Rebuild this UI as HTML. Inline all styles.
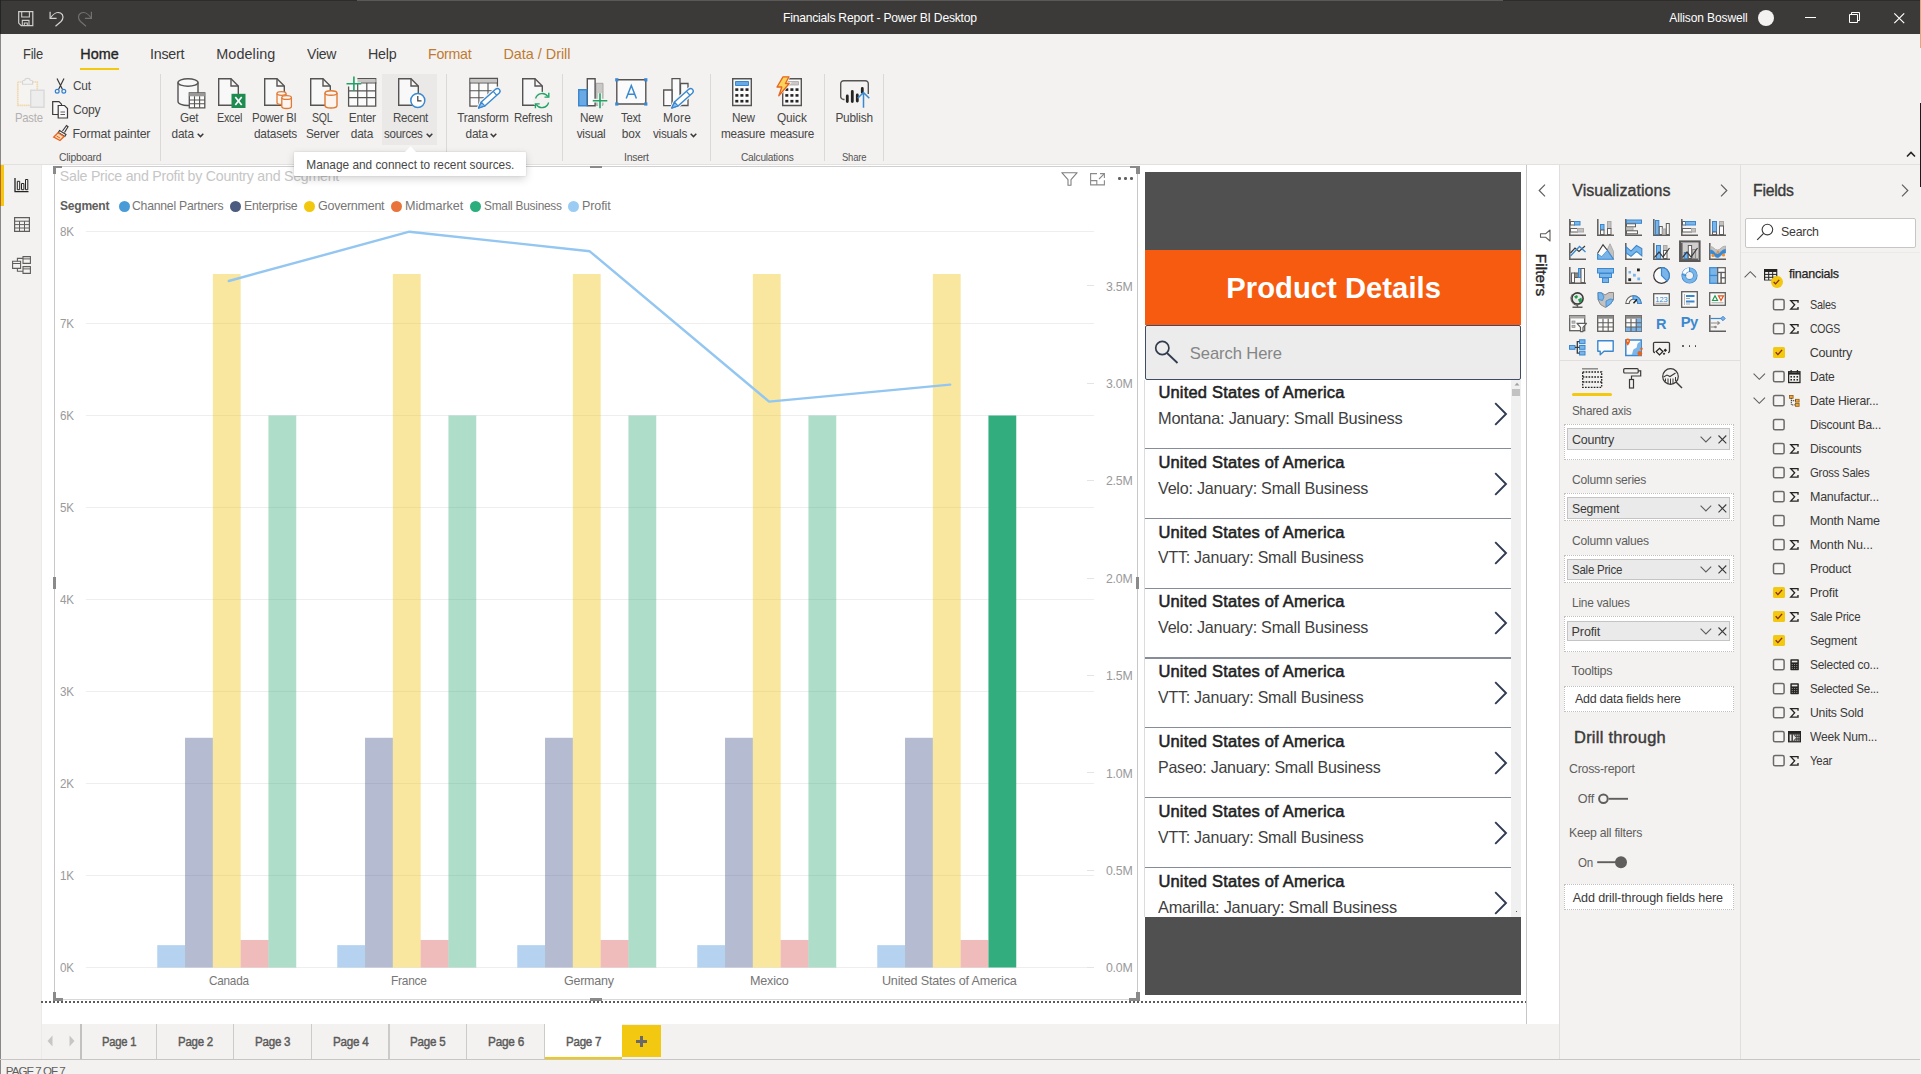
<!DOCTYPE html>
<html><head><meta charset="utf-8"><title>Financials Report - Power BI Desktop</title>
<style>
html,body{margin:0;padding:0;}
body{width:1921px;height:1074px;}
body{position:relative;background:#f3f2f1;font-family:"Liberation Sans",sans-serif;}
#app{position:absolute;left:0;top:0;width:1921px;height:1074px;overflow:hidden;background:#f3f2f1;}
.r{position:absolute;display:block;}
.t{position:absolute;white-space:nowrap;display:block;}
svg{overflow:visible;}
</style></head><body><div id="app">

<div class="r" style="left:0.00px;top:0.00px;width:1921.00px;height:34.00px;background:#3b3a39;"></div>
<div class="r" style="left:0.00px;top:0.00px;width:1921.00px;height:1.00px;background:#2d2c2b;"></div>
<div class="r" style="left:0.00px;top:0.00px;width:1.00px;height:34.00px;background:#242424;"></div>
<div class="r" style="left:357.00px;top:0.00px;width:1146.00px;height:1.00px;background:#5a5958;"></div>
<svg class="r" style="left:18.00px;top:11.00px;" width="16" height="16" viewBox="0 0 16 16" preserveAspectRatio="none"><path d="M0.700 0.700H14.800V14.600H3.200L0.700 12.100z" fill="none" stroke="#d0cfce" stroke-width="1.200"/><path d="M3.700 0.700V6H11.400V0.700M4.300 14.600V9.400H11V14.600M6.300 14.600V12H9.300V14.600" fill="none" stroke="#d0cfce" stroke-width="1.100"/></svg>
<svg class="r" style="left:48.80px;top:10.50px;" width="16" height="16" viewBox="0 0 16 16" preserveAspectRatio="none"><path d="M1.100 0.800V7.300H7.600" fill="none" stroke="#d6d5d4" stroke-width="1.200"/><path d="M1.600 6.800C4 3 8 0.500 11.500 2C15 3.800 14.500 8 12 10.500L6.500 15.200" fill="none" stroke="#d6d5d4" stroke-width="1.200"/></svg>
<svg class="r" style="left:76.70px;top:10.50px;" width="16" height="16" viewBox="0 0 16 16" preserveAspectRatio="none"><path d="M14.400 0.800V7.300H7.900" fill="none" stroke="#72716f" stroke-width="1.200"/><path d="M13.900 6.800C11.500 3 7.500 0.500 4 2C0.500 3.800 1 8 3.500 10.500L9 15.200" fill="none" stroke="#72716f" stroke-width="1.200"/></svg>
<span class="t" style="left:783.00px;top:11.90px;font-size:12.10px;line-height:13.53px;color:#ffffff;letter-spacing:-0.221px;">Financials Report - Power BI Desktop</span>
<span class="t" style="left:1669.30px;top:11.96px;font-size:12.00px;line-height:13.42px;color:#ffffff;letter-spacing:-0.110px;">Allison Boswell</span>
<div class="r" style="left:1757.80px;top:9.80px;width:16.00px;height:16.00px;background:#f3f2f1;border-radius:50%;"></div>
<div class="r" style="left:1805.30px;top:17.30px;width:10.50px;height:1.10px;background:#ffffff;"></div>
<svg class="r" style="left:1849.00px;top:12.00px;" width="11" height="11" viewBox="0 0 11 11" preserveAspectRatio="none"><path d="M0.5 2.500h8v8h-8z" fill="none" stroke="#fff" stroke-width="1"/><path d="M2.500 2.500v-2h8v8h-2" fill="none" stroke="#fff" stroke-width="1"/></svg>
<svg class="r" style="left:1893.50px;top:12.50px;" width="10.5" height="10.5" viewBox="0 0 10.5 10.5" preserveAspectRatio="none"><path d="M0.300 0.300l9.900 9.900M10.200 0.300l-9.900 9.900" fill="none" stroke="#fff" stroke-width="1.2"/></svg>
<div class="r" style="left:0.00px;top:34.00px;width:1921.00px;height:130.50px;background:#f3f2f1;"></div>
<span class="t" style="left:22.60px;top:45.51px;font-size:14.40px;line-height:16.10px;color:#3b3a39;letter-spacing:-0.250px;transform:scaleX(0.8996);transform-origin:0 50%;">File</span>
<span class="t" style="left:80.20px;top:45.51px;font-size:14.40px;line-height:16.10px;color:#252423;letter-spacing:0.063px;-webkit-text-stroke:0.35px #252423;">Home</span>
<span class="t" style="left:149.80px;top:45.51px;font-size:14.40px;line-height:16.10px;color:#3b3a39;letter-spacing:-0.250px;transform:scaleX(0.9924);transform-origin:0 50%;">Insert</span>
<span class="t" style="left:216.30px;top:45.51px;font-size:14.40px;line-height:16.10px;color:#3b3a39;letter-spacing:0.080px;">Modeling</span>
<span class="t" style="left:307.00px;top:45.51px;font-size:14.40px;line-height:16.10px;color:#3b3a39;letter-spacing:-0.250px;transform:scaleX(0.9768);transform-origin:0 50%;">View</span>
<span class="t" style="left:367.70px;top:45.51px;font-size:14.40px;line-height:16.10px;color:#3b3a39;letter-spacing:-0.250px;transform:scaleX(0.9908);transform-origin:0 50%;">Help</span>
<span class="t" style="left:427.60px;top:45.51px;font-size:14.40px;line-height:16.10px;color:#c07a30;letter-spacing:-0.250px;transform:scaleX(0.9852);transform-origin:0 50%;">Format</span>
<span class="t" style="left:503.50px;top:45.51px;font-size:14.40px;line-height:16.10px;color:#c07a30;letter-spacing:-0.019px;">Data / Drill</span>
<div class="r" style="left:80.20px;top:67.60px;width:38.80px;height:2.70px;background:#f2c811;"></div>
<svg class="r" style="left:1906.00px;top:151.00px;" width="10" height="7" viewBox="0 0 10 7" preserveAspectRatio="none"><path d="M1 5.500l4 -4 4 4" fill="none" stroke="#252423" stroke-width="1.6"/></svg>
<div class="r" style="left:0.00px;top:163.90px;width:1921.00px;height:1.40px;background:#e2e1e0;"></div>
<div class="r" style="left:42.00px;top:165.30px;width:1484.50px;height:858.70px;background:#ffffff;"></div>
<div class="r" style="left:0.00px;top:165.30px;width:41.00px;height:893.70px;background:#f3f2f1;"></div>
<div class="r" style="left:40.70px;top:165.30px;width:1.00px;height:893.70px;background:#ebeae9;"></div>
<div class="r" style="left:0.00px;top:165.40px;width:4.00px;height:40.50px;background:#f2c811;"></div>
<svg class="r" style="left:14.00px;top:178.00px;" width="15" height="15" viewBox="0 0 15 15" preserveAspectRatio="none"><path d="M1 0v13.700h13.500" fill="none" stroke="#252423" stroke-width="1.3"/><path d="M3.300 11.700V3.300h2.400v8.400zM7.500 11.700V5.500h2.400v6.200zM11.500 11.700V1.500h2.300v10.200z" fill="none" stroke="#252423" stroke-width="1"/></svg>
<svg class="r" style="left:13.50px;top:217.00px;" width="16" height="15" viewBox="0 0 16 15" preserveAspectRatio="none"><path d="M0.600 0.600h14.800v13.800H0.600z" fill="none" stroke="#605e5c" stroke-width="1.2"/><path d="M0.600 4.200h14.800M0.600 7.600h14.800M0.600 11h14.800M5.500 4.200v10.200M10.500 4.200v10.200" fill="none" stroke="#605e5c" stroke-width="1"/></svg>
<svg class="r" style="left:12.00px;top:256.00px;" width="19" height="18" viewBox="0 0 19 18" preserveAspectRatio="none"><path d="M11 0.600h7.400v6.800H11zM11 10.600h7.400v6.800H11zM0.600 5.200h8v7.200H0.600z" fill="none" stroke="#605e5c" stroke-width="1.100"/><path d="M11 2.900h7.400M11 12.900h7.400M0.600 7.500h8" fill="none" stroke="#605e5c" stroke-width="1"/><path d="M5.400 5.200V2.400H11M5.400 12.400V15.200H11" fill="none" stroke="#605e5c" stroke-width="1.100"/></svg>
<div class="r" style="left:0.00px;top:34.00px;width:1.00px;height:1040.00px;background:#8a8886;"></div>
<div class="r" style="left:0.00px;top:165.40px;width:1.00px;height:40.50px;background:#b5672a;"></div>
<div class="r" style="left:41px;top:1000.5px;width:1486px;height:0;border-top:2px dotted #5c5c5c;"></div>
<div class="r" style="left:1526.00px;top:165.30px;width:1.00px;height:858.70px;background:#c8c6c4;"></div>
<div class="r" style="left:1527.00px;top:165.30px;width:32.00px;height:858.70px;background:#ffffff;"></div>
<div class="r" style="left:1559.00px;top:165.30px;width:1.00px;height:893.70px;background:#e1dfdd;"></div>
<svg class="r" style="left:1538.00px;top:183.50px;" width="8" height="13" viewBox="0 0 8 13" preserveAspectRatio="none"><path d="M7 0.700L1.200 6.500 7 12.300" fill="none" stroke="#605e5c" stroke-width="1.2"/></svg>
<svg class="r" style="left:1538.50px;top:228.50px;" width="12" height="13" viewBox="0 0 12 13" preserveAspectRatio="none"><path d="M11 1v11l-4.500 -3.800H1.500v-3.400H6.500z" fill="none" stroke="#605e5c" stroke-width="1.1" stroke-linejoin="round"/></svg>
<span class="t" style="left:1518.0px;top:267.3px;width:46px;text-align:center;font-size:15.4px;line-height:16px;color:#252423;transform:rotate(90deg);transform-origin:50% 50%;-webkit-text-stroke:0.4px #252423;letter-spacing:0.1px;">Filters</span>
<div class="r" style="left:42.00px;top:1024.00px;width:1517.00px;height:35.00px;background:#f3f2f1;"></div>
<svg class="r" style="left:47.00px;top:1035.00px;" width="6" height="12" viewBox="0 0 6 12" preserveAspectRatio="none"><path d="M5.500 0.500v11L0.500 6z" fill="#c8c6c4"/></svg>
<svg class="r" style="left:69.00px;top:1035.00px;" width="6" height="12" viewBox="0 0 6 12" preserveAspectRatio="none"><path d="M0.500 0.500v11L5.500 6z" fill="#c8c6c4"/></svg>
<div class="r" style="left:80.20px;top:1024.00px;width:2.00px;height:35.00px;background:#c2c1c0;"></div>
<div class="r" style="left:155.80px;top:1024.00px;width:1.20px;height:35.00px;background:#cccbca;"></div>
<div class="r" style="left:233.00px;top:1024.00px;width:1.20px;height:35.00px;background:#cccbca;"></div>
<div class="r" style="left:311.00px;top:1024.00px;width:1.20px;height:35.00px;background:#cccbca;"></div>
<div class="r" style="left:388.40px;top:1024.00px;width:1.20px;height:35.00px;background:#cccbca;"></div>
<div class="r" style="left:465.80px;top:1024.00px;width:1.20px;height:35.00px;background:#cccbca;"></div>
<div class="r" style="left:544.10px;top:1024.00px;width:1.20px;height:35.00px;background:#cccbca;"></div>
<div class="r" style="left:621.30px;top:1024.00px;width:1.20px;height:35.00px;background:#cccbca;"></div>
<div class="r" style="left:544.90px;top:1024.00px;width:76.90px;height:32.60px;background:#ffffff;"></div>
<div class="r" style="left:544.90px;top:1056.60px;width:76.90px;height:2.20px;background:#f2c811;"></div>
<span class="t" style="left:101.90px;top:1034.62px;font-size:12.60px;line-height:14.09px;color:#5b5a59;letter-spacing:-0.250px;transform:scaleX(0.8892);transform-origin:0 50%;-webkit-text-stroke:0.45px #5b5a59;">Page 1</span>
<span class="t" style="left:177.80px;top:1034.62px;font-size:12.60px;line-height:14.09px;color:#5b5a59;letter-spacing:-0.250px;transform:scaleX(0.9099);transform-origin:0 50%;-webkit-text-stroke:0.45px #5b5a59;">Page 2</span>
<span class="t" style="left:255.30px;top:1034.62px;font-size:12.60px;line-height:14.09px;color:#5b5a59;letter-spacing:-0.250px;transform:scaleX(0.9177);transform-origin:0 50%;-webkit-text-stroke:0.45px #5b5a59;">Page 3</span>
<span class="t" style="left:332.70px;top:1034.62px;font-size:12.60px;line-height:14.09px;color:#5b5a59;letter-spacing:-0.250px;transform:scaleX(0.9254);transform-origin:0 50%;-webkit-text-stroke:0.45px #5b5a59;">Page 4</span>
<span class="t" style="left:410.20px;top:1034.62px;font-size:12.60px;line-height:14.09px;color:#5b5a59;letter-spacing:-0.250px;transform:scaleX(0.9203);transform-origin:0 50%;-webkit-text-stroke:0.45px #5b5a59;">Page 5</span>
<span class="t" style="left:487.80px;top:1034.62px;font-size:12.60px;line-height:14.09px;color:#5b5a59;letter-spacing:-0.250px;transform:scaleX(0.9358);transform-origin:0 50%;-webkit-text-stroke:0.45px #5b5a59;">Page 6</span>
<span class="t" style="left:565.60px;top:1034.62px;font-size:12.60px;line-height:14.09px;color:#5b5a59;letter-spacing:-0.250px;transform:scaleX(0.9151);transform-origin:0 50%;-webkit-text-stroke:0.45px #5b5a59;">Page 7</span>
<div class="r" style="left:622.20px;top:1025.10px;width:39.10px;height:31.80px;background:#f2c811;"></div>
<div class="r" style="left:636.20px;top:1040.20px;width:11.00px;height:2.80px;background:#69696a;"></div>
<div class="r" style="left:640.30px;top:1036.10px;width:2.80px;height:11.00px;background:#69696a;"></div>
<div class="r" style="left:0.00px;top:1058.80px;width:1921.00px;height:1.00px;background:#c8c6c4;"></div>
<div class="r" style="left:0.00px;top:1059.80px;width:1921.00px;height:14.20px;background:#f3f2f1;"></div>
<div class="r" style="left:0.00px;top:1059.80px;width:1.00px;height:14.20px;background:#8a8886;"></div>
<span class="t" style="left:5.80px;top:1065.48px;font-size:11.60px;line-height:12.97px;color:#605e5c;letter-spacing:-1.005px;">PAGE 7 OF 7</span>
<div class="r" style="left:381.90px;top:73.60px;width:55.60px;height:71.30px;background:#eae9e8;"></div>
<div class="r" style="left:160.30px;top:74.00px;width:1.00px;height:87.00px;background:#dad9d8;"></div>
<div class="r" style="left:446.00px;top:74.00px;width:1.00px;height:87.00px;background:#dad9d8;"></div>
<div class="r" style="left:562.30px;top:74.00px;width:1.00px;height:87.00px;background:#dad9d8;"></div>
<div class="r" style="left:710.30px;top:74.00px;width:1.00px;height:87.00px;background:#dad9d8;"></div>
<div class="r" style="left:824.20px;top:74.00px;width:1.00px;height:87.00px;background:#dad9d8;"></div>
<div class="r" style="left:883.30px;top:74.00px;width:1.00px;height:87.00px;background:#dad9d8;"></div>
<svg class="r" style="left:16.00px;top:77.00px;" width="29" height="31" viewBox="0 0 29 31" preserveAspectRatio="none"><path d="M1.800 5h19.500v23.300H1.800z" fill="#f6f4f1" stroke="#f0d9b0" stroke-width="1.700" stroke-dasharray="1.600 0.500"/><path d="M6.500 7.300V4.600c0 -1 0.800 -1.400 2.300 -1.400 0.300 -2.500 5.200 -2.500 5.500 0 1.500 0 2.300 0.400 2.300 1.400v2.700z" fill="#f3f3f3" stroke="#d6d6d6" stroke-width="1.100"/><path d="M14.700 13.200h13.300v17H14.700z" fill="#ededed" stroke="#d9d9d9" stroke-width="1.400"/></svg>
<span class="t" style="left:14.50px;top:112.14px;font-size:11.85px;line-height:13.25px;color:#b3b1af;letter-spacing:-0.250px;transform:scaleX(0.9556);transform-origin:0 50%;">Paste</span>
<svg class="r" style="left:54.00px;top:78.00px;" width="13" height="16" viewBox="0 0 13 16" preserveAspectRatio="none"><path d="M3 0.500l5.500 11M10 0.500L4.500 11.500" fill="none" stroke="#3b3a39" stroke-width="1.2"/><circle cx="3.200" cy="13.300" r="1.900" fill="none" stroke="#2f7fd0" stroke-width="1.2"/><circle cx="9.800" cy="13.300" r="1.900" fill="none" stroke="#2f7fd0" stroke-width="1.2"/></svg>
<span class="t" style="left:72.50px;top:80.46px;font-size:12.35px;line-height:13.81px;color:#484746;letter-spacing:-0.250px;transform:scaleX(0.9616);transform-origin:0 50%;">Cut</span>
<svg class="r" style="left:52.00px;top:101.00px;" width="17" height="18" viewBox="0 0 17 18" preserveAspectRatio="none"><path d="M0.700 0.700h6.300l2.500 2.500v10.300H0.700z" fill="#f8f8f8" stroke="#3b3a39" stroke-width="1.2"/><path d="M6.200 4.500h6.300l3 3v9.500H6.200z" fill="#f8f8f8" stroke="#3b3a39" stroke-width="1.2"/><path d="M8.500 11h4.500M8.500 13.500h4.500" stroke="#605e5c" stroke-width="1"/></svg>
<span class="t" style="left:72.50px;top:104.26px;font-size:12.35px;line-height:13.81px;color:#484746;letter-spacing:-0.250px;transform:scaleX(0.9793);transform-origin:0 50%;">Copy</span>
<svg class="r" style="left:52.50px;top:125.00px;" width="16" height="16" viewBox="0 0 16 16" preserveAspectRatio="none"><path d="M9.500 6l4 -5.500 1.500 1.200 -3.500 5.800" fill="#f8f8f8" stroke="#3b3a39" stroke-width="1.2"/><path d="M6.500 5.500l6.500 4 -1.200 2 -6.500 -4z" fill="#f8f8f8" stroke="#3b3a39" stroke-width="1.100"/><path d="M5 7.800l6 3.700 -4 4 -6.300 -3.500z" fill="#fbd9b8" stroke="#e8641b" stroke-width="1.300"/><path d="M3.500 11l3.500 2" stroke="#e8641b" stroke-width="1"/></svg>
<span class="t" style="left:72.50px;top:128.46px;font-size:12.35px;line-height:13.81px;color:#484746;letter-spacing:-0.177px;">Format painter</span>
<span class="t" style="left:59.00px;top:150.72px;font-size:11.00px;line-height:12.30px;color:#565453;letter-spacing:-0.250px;transform:scaleX(0.9427);transform-origin:0 50%;">Clipboard</span>
<svg class="r" style="left:177.00px;top:77.50px;" width="29" height="31" viewBox="0 0 29 31" preserveAspectRatio="none"><path d="M1 4.500v19c0 2.300 4.500 4 10 4s10 -1.700 10 -4v-19" fill="#f8f8f8" stroke="#565453" stroke-width="1.4"/><ellipse cx="11" cy="4.500" rx="10" ry="3.800" fill="#f8f8f8" stroke="#565453" stroke-width="1.4"/><path d="M12.300 15h15.500v14.800H12.300z" fill="#fdfdfd" stroke="#565453" stroke-width="1.300"/><path d="M12.300 15h15.500v3.300H12.300z" fill="#9a9998"/><path d="M12.300 22h15.500M12.300 25.800h15.500M17.500 18.300v11.500M22.600 18.300v11.500" stroke="#565453" stroke-width="1.100"/></svg>
<span class="t" style="left:179.55px;top:112.14px;font-size:11.85px;line-height:13.25px;color:#484746;letter-spacing:-0.250px;transform:scaleX(0.9946);transform-origin:0 50%;">Get</span>
<span class="t" style="left:171.50px;top:128.24px;font-size:11.85px;line-height:13.25px;color:#484746;letter-spacing:-0.188px;">data</span>
<svg class="r" style="left:196.50px;top:133.20px;" width="7" height="5" viewBox="0 0 7 5" preserveAspectRatio="none"><path d="M0.700 0.800l2.800 2.800 2.800 -2.800" fill="none" stroke="#3b3a39" stroke-width="1.5"/></svg>
<svg class="r" style="left:217.50px;top:77.50px;" width="28" height="31" viewBox="0 0 28 31" preserveAspectRatio="none"><path d="M0.700 0.700h12.300l7.300 7.300v19.300H0.700z" fill="#f8f8f8" stroke="#565453" stroke-width="1.4"/><path d="M13 0.700v7.300h7.300" fill="none" stroke="#565453" stroke-width="1.4"/><path d="M13.500 15.800h14v14.200h-14z" fill="#1e8b4f"/><path d="M17.300 19l6.400 8M23.700 19l-6.400 8" stroke="#fff" stroke-width="1.700"/></svg>
<span class="t" style="left:216.50px;top:112.14px;font-size:11.85px;line-height:13.25px;color:#484746;letter-spacing:-0.250px;transform:scaleX(0.9079);transform-origin:0 50%;">Excel</span>
<svg class="r" style="left:264.00px;top:77.50px;" width="29" height="31" viewBox="0 0 29 31" preserveAspectRatio="none"><path d="M0.700 0.700h12.300l7.300 7.300v19.300H0.700z" fill="#f8f8f8" stroke="#565453" stroke-width="1.4"/><path d="M13 0.700v7.300h7.300" fill="none" stroke="#565453" stroke-width="1.4"/><g fill="#fdf6f0" stroke="#e07a35" stroke-width="1.300"><path d="M13 15.500v9c0 1.300 2.300 2 4.500 2s4.500 -0.700 4.500 -2v-9"/><ellipse cx="17.500" cy="15.500" rx="4.500" ry="1.800"/><path d="M17.800 19.500v9c0 1.300 2.300 2 4.800 2s4.800 -0.700 4.800 -2v-9"/><ellipse cx="22.600" cy="19.500" rx="4.800" ry="1.900"/></g></svg>
<span class="t" style="left:251.50px;top:112.14px;font-size:11.85px;line-height:13.25px;color:#484746;letter-spacing:-0.250px;transform:scaleX(0.9670);transform-origin:0 50%;">Power BI</span>
<span class="t" style="left:254.00px;top:128.24px;font-size:11.85px;line-height:13.25px;color:#484746;letter-spacing:-0.214px;">datasets</span>
<svg class="r" style="left:310.30px;top:77.50px;" width="29" height="31" viewBox="0 0 29 31" preserveAspectRatio="none"><path d="M0.700 0.700h12.300l7.300 7.300v19.300H0.700z" fill="#f8f8f8" stroke="#565453" stroke-width="1.4"/><path d="M13 0.700v7.300h7.300" fill="none" stroke="#565453" stroke-width="1.4"/><g fill="#fdf6f0" stroke="#e07a35" stroke-width="1.400"><path d="M15 15v12.500c0 1.600 2.800 2.500 6 2.500s6 -0.900 6 -2.500V15"/><ellipse cx="21" cy="15" rx="6" ry="2.300"/></g></svg>
<span class="t" style="left:311.90px;top:112.14px;font-size:11.85px;line-height:13.25px;color:#484746;letter-spacing:-0.250px;transform:scaleX(0.8875);transform-origin:0 50%;">SQL</span>
<span class="t" style="left:305.60px;top:128.24px;font-size:11.85px;line-height:13.25px;color:#484746;letter-spacing:-0.250px;transform:scaleX(0.9925);transform-origin:0 50%;">Server</span>
<svg class="r" style="left:345.50px;top:75.50px;" width="31" height="31" viewBox="0 0 31 31" preserveAspectRatio="none"><path d="M2.600 10.500V30.100H29.700V2.600H11.400" fill="#fbfbfb" stroke="#565453" stroke-width="1.300"/><path d="M11.400 3.200h18.3v3.400h-18.3z" fill="#c6c5c4"/><path d="M15 7h15.400M2.600 14.800H29.700M2.600 21.700H29.700M11.700 7V30.100M20.800 7V30.100" fill="none" stroke="#565453" stroke-width="1.200"/><path d="M7.900 0.400v14.700M0.500 7.750h14.800" stroke="#21a366" stroke-width="1.600"/></svg>
<span class="t" style="left:348.75px;top:112.14px;font-size:11.85px;line-height:13.25px;color:#484746;letter-spacing:-0.250px;">Enter</span>
<span class="t" style="left:350.75px;top:128.24px;font-size:11.85px;line-height:13.25px;color:#484746;letter-spacing:-0.188px;">data</span>
<svg class="r" style="left:398.30px;top:77.50px;" width="29" height="31" viewBox="0 0 29 31" preserveAspectRatio="none"><path d="M0.700 0.700h12.300l7.300 7.300v19.300H0.700z" fill="#f8f8f8" stroke="#565453" stroke-width="1.4"/><path d="M13 0.700v7.300h7.300" fill="none" stroke="#565453" stroke-width="1.4"/><circle cx="19.800" cy="22.500" r="7" fill="#ffffff" stroke="#3a88d0" stroke-width="1.500"/><path d="M19.800 18v4.800h3.700" fill="none" stroke="#3b3a39" stroke-width="1.200"/></svg>
<span class="t" style="left:392.50px;top:112.14px;font-size:11.85px;line-height:13.25px;color:#484746;letter-spacing:-0.250px;transform:scaleX(0.9725);transform-origin:0 50%;">Recent</span>
<span class="t" style="left:384.40px;top:128.24px;font-size:11.85px;line-height:13.25px;color:#484746;letter-spacing:-0.250px;transform:scaleX(0.9727);transform-origin:0 50%;">sources</span>
<svg class="r" style="left:425.60px;top:133.20px;" width="7" height="5" viewBox="0 0 7 5" preserveAspectRatio="none"><path d="M0.700 0.800l2.800 2.800 2.800 -2.800" fill="none" stroke="#3b3a39" stroke-width="1.5"/></svg>
<svg class="r" style="left:468.50px;top:77.50px;" width="32" height="31" viewBox="0 0 32 31" preserveAspectRatio="none"><path d="M0.900 0.500h27.500v27.600H0.900z" fill="#fbfbfb" stroke="#565453" stroke-width="1.300"/><path d="M1.500 1.100h26.300v3.300H1.500z" fill="#c6c5c4"/><path d="M0.900 5h27.500M0.900 12.800h27.500M0.900 19.700h27.500M9.900 5v23M19 5v23" fill="none" stroke="#565453" stroke-width="1.100"/><path d="M12.500 32L33 13.500V32z" fill="#f3f2f1"/><path d="M9.600 30L12.330 24.070 26.840 11.070A2.600 2.600 0 0 1 30.300 14.930L15.790 27.930z" fill="#f3f2f1" stroke="#f3f2f1" stroke-width="3.600" stroke-linejoin="round"/><path d="M9.600 30L12.330 24.070 26.840 11.070A2.600 2.600 0 0 1 30.300 14.930L15.790 27.930z" fill="#ffffff" stroke="#3a88d0" stroke-width="1.400" stroke-linejoin="round"/><path d="M9.600 30L12.330 24.070 15.790 27.930z" fill="#8fc1ee" stroke="#3a88d0" stroke-width="1.200" stroke-linejoin="round"/><path d="M24.240 13.400L27.700 17.260" stroke="#3a88d0" stroke-width="1.200"/></svg>
<span class="t" style="left:457.30px;top:112.14px;font-size:11.85px;line-height:13.25px;color:#484746;letter-spacing:-0.250px;">Transform</span>
<span class="t" style="left:465.60px;top:128.24px;font-size:11.85px;line-height:13.25px;color:#484746;letter-spacing:-0.221px;">data</span>
<svg class="r" style="left:490.40px;top:133.20px;" width="7" height="5" viewBox="0 0 7 5" preserveAspectRatio="none"><path d="M0.700 0.800l2.800 2.800 2.800 -2.800" fill="none" stroke="#3b3a39" stroke-width="1.5"/></svg>
<svg class="r" style="left:521.60px;top:77.50px;" width="29" height="31" viewBox="0 0 29 31" preserveAspectRatio="none"><path d="M0.700 0.700h12.300l7.300 7.300v19.300H0.700z" fill="#f8f8f8" stroke="#565453" stroke-width="1.4"/><path d="M13 0.700v7.300h7.300" fill="none" stroke="#565453" stroke-width="1.4"/><circle cx="20" cy="22.500" r="8.800" fill="#f3f2f1"/><path d="M13.600 20.500a6.800 6.800 0 0 1 12.300 -1.800M26.600 24.500a6.800 6.800 0 0 1 -12.400 1.800" fill="none" stroke="#21a366" stroke-width="1.300"/><path d="M26.800 14.800v4.300h-4.300M13.400 30.200v-4.300h4.300" fill="none" stroke="#21a366" stroke-width="1.400"/></svg>
<span class="t" style="left:513.80px;top:112.14px;font-size:11.85px;line-height:13.25px;color:#484746;letter-spacing:-0.250px;transform:scaleX(0.9627);transform-origin:0 50%;">Refresh</span>
<svg class="r" style="left:577.60px;top:77.50px;" width="30" height="31" viewBox="0 0 30 31" preserveAspectRatio="none"><path d="M18 5.300h7v22h-7z" fill="#c9c8c7" stroke="#a9a8a7" stroke-width="1"/><path d="M9.300 0.700h7.800v27h-7.800z" fill="#fbfbfb" stroke="#565453" stroke-width="1.400"/><path d="M0.700 11.700h8v16h-8z" fill="#6aaae4" stroke="#3a88d0" stroke-width="1.400"/><path d="M22 15v15.500M14.500 22.700h15" stroke="#f3f2f1" stroke-width="3.800"/><path d="M22 15.300v15M14.800 22.700h14.500" stroke="#21a366" stroke-width="1.600"/></svg>
<span class="t" style="left:579.80px;top:112.14px;font-size:11.85px;line-height:13.25px;color:#484746;letter-spacing:-0.250px;transform:scaleX(0.9911);transform-origin:0 50%;">New</span>
<span class="t" style="left:576.70px;top:128.24px;font-size:11.85px;line-height:13.25px;color:#484746;letter-spacing:-0.250px;">visual</span>
<svg class="r" style="left:615.00px;top:78.00px;" width="33" height="28" viewBox="0 0 33 28" preserveAspectRatio="none"><path d="M1.800 1.800h29v24.200h-29z" fill="#fbfbfb" stroke="#565453" stroke-width="1.400"/><path d="M11.200 20.500L16.300 7.500 21.400 20.500M13 16.200h6.600" fill="none" stroke="#3a88d0" stroke-width="1.500"/><g fill="#3a88d0"><rect x="0.200" y="0.200" width="3.200" height="3.200"/><rect x="29.200" y="0.200" width="3.200" height="3.200"/><rect x="0.200" y="24.400" width="3.200" height="3.200"/><rect x="29.200" y="24.400" width="3.200" height="3.200"/></g></svg>
<span class="t" style="left:621.30px;top:112.14px;font-size:11.85px;line-height:13.25px;color:#484746;letter-spacing:-0.250px;transform:scaleX(0.9532);transform-origin:0 50%;">Text</span>
<span class="t" style="left:621.80px;top:128.24px;font-size:11.85px;line-height:13.25px;color:#484746;letter-spacing:-0.053px;">box</span>
<svg class="r" style="left:662.70px;top:77.50px;" width="31" height="31" viewBox="0 0 31 31" preserveAspectRatio="none"><path d="M17.500 5.500h7.500v22h-7.500z" fill="#fbfbfb" stroke="#565453" stroke-width="1.300"/><path d="M9 0.700h8v27H9z" fill="#fbfbfb" stroke="#565453" stroke-width="1.300"/><path d="M0.700 12h8.300v15.700H0.700z" fill="#fbfbfb" stroke="#565453" stroke-width="1.300"/><g transform="translate(-0.800,0)"><path d="M9.600 30L12.330 24.070 26.840 11.070A2.600 2.600 0 0 1 30.300 14.930L15.790 27.930z" fill="#f3f2f1" stroke="#f3f2f1" stroke-width="3.600" stroke-linejoin="round"/><path d="M9.600 30L12.330 24.070 26.840 11.070A2.600 2.600 0 0 1 30.300 14.930L15.790 27.930z" fill="#ffffff" stroke="#3a88d0" stroke-width="1.400" stroke-linejoin="round"/><path d="M9.600 30L12.330 24.070 15.790 27.930z" fill="#8fc1ee" stroke="#3a88d0" stroke-width="1.200" stroke-linejoin="round"/><path d="M24.240 13.400L27.700 17.260" stroke="#3a88d0" stroke-width="1.200"/></g></svg>
<span class="t" style="left:662.50px;top:112.14px;font-size:11.85px;line-height:13.25px;color:#484746;letter-spacing:0.250px;transform:scaleX(1.0091);transform-origin:0 50%;">More</span>
<span class="t" style="left:653.00px;top:128.24px;font-size:11.85px;line-height:13.25px;color:#484746;letter-spacing:-0.250px;transform:scaleX(0.9879);transform-origin:0 50%;">visuals</span>
<svg class="r" style="left:689.50px;top:133.20px;" width="7" height="5" viewBox="0 0 7 5" preserveAspectRatio="none"><path d="M0.700 0.800l2.800 2.800 2.800 -2.800" fill="none" stroke="#3b3a39" stroke-width="1.5"/></svg>
<span class="t" style="left:623.80px;top:150.72px;font-size:11.00px;line-height:12.30px;color:#565453;letter-spacing:-0.250px;transform:scaleX(0.9520);transform-origin:0 50%;">Insert</span>
<svg class="r" style="left:732.00px;top:77.50px;" width="20" height="29" viewBox="0 0 20 29" preserveAspectRatio="none"><path d="M0.700 0.700h18.600v26.800H0.700z" fill="#fbfbfb" stroke="#565453" stroke-width="1.400"/><path d="M3.500 3.500h13v4h-13z" fill="#6aaae4" stroke="#3a88d0" stroke-width="1"/><g fill="#252423"><rect x="3.3" y="10.3" width="3" height="2.600"/><rect x="8.4" y="10.3" width="3" height="2.600"/><rect x="13.5" y="10.3" width="3" height="2.600"/><rect x="3.3" y="16.1" width="3" height="2.600"/><rect x="8.4" y="16.1" width="3" height="2.600"/><rect x="13.5" y="16.1" width="3" height="2.600"/><rect x="3.3" y="21.9" width="3" height="2.600"/><rect x="8.4" y="21.9" width="3" height="2.600"/><rect x="13.5" y="21.9" width="3" height="2.600"/></g></svg>
<span class="t" style="left:731.70px;top:112.14px;font-size:11.85px;line-height:13.25px;color:#484746;letter-spacing:-0.250px;transform:scaleX(0.9911);transform-origin:0 50%;">New</span>
<span class="t" style="left:720.60px;top:128.24px;font-size:11.85px;line-height:13.25px;color:#484746;letter-spacing:-0.250px;transform:scaleX(0.9954);transform-origin:0 50%;">measure</span>
<svg class="r" style="left:781.70px;top:77.50px;" width="20" height="29" viewBox="0 0 20 29" preserveAspectRatio="none"><path d="M0.700 0.700h18.600v26.800H0.700z" fill="#fbfbfb" stroke="#565453" stroke-width="1.400"/><path d="M5 3.500h11.500v3.500H5z" fill="#c9c8c7" stroke="#a9a8a7" stroke-width="0.800"/><g fill="#252423"><rect x="3.3" y="10.3" width="3" height="2.600"/><rect x="8.4" y="10.3" width="3" height="2.600"/><rect x="13.5" y="10.3" width="3" height="2.600"/><rect x="3.3" y="16.1" width="3" height="2.600"/><rect x="8.4" y="16.1" width="3" height="2.600"/><rect x="13.5" y="16.1" width="3" height="2.600"/><rect x="3.3" y="21.9" width="3" height="2.600"/><rect x="8.4" y="21.9" width="3" height="2.600"/><rect x="13.5" y="21.9" width="3" height="2.600"/></g></svg>
<svg class="r" style="left:775.50px;top:75.50px;" width="14" height="21" viewBox="0 0 14 21" preserveAspectRatio="none"><path d="M7 0.800h6l-3.600 6.700h3.800L2.800 19.800l3 -8.800H1z" fill="#f3f2f1" stroke="#f3f2f1" stroke-width="2.500"/><path d="M7 0.800h6l-3.600 6.700h3.800L2.800 19.800l3 -8.800H1z" fill="#f9d35b" stroke="#e8641b" stroke-width="1.300" stroke-linejoin="round"/></svg>
<span class="t" style="left:776.90px;top:112.14px;font-size:11.85px;line-height:13.25px;color:#484746;letter-spacing:-0.073px;">Quick</span>
<span class="t" style="left:769.80px;top:128.24px;font-size:11.85px;line-height:13.25px;color:#484746;letter-spacing:-0.250px;transform:scaleX(0.9909);transform-origin:0 50%;">measure</span>
<span class="t" style="left:740.70px;top:150.72px;font-size:11.00px;line-height:12.30px;color:#565453;letter-spacing:-0.250px;transform:scaleX(0.9236);transform-origin:0 50%;">Calculations</span>
<svg class="r" style="left:839.50px;top:80.00px;" width="31" height="28" viewBox="0 0 31 28" preserveAspectRatio="none"><path d="M4.500 19.500h-0.800a3 3 0 0 1 -3 -3V3.700a3 3 0 0 1 3 -3h21.600a3 3 0 0 1 3 3V14" fill="none" stroke="#565453" stroke-width="1.400"/><g stroke="#252423" stroke-width="2.800" stroke-linecap="round"><path d="M7.300 16v5.500M12.300 11.500v10M17.300 15v6M22.300 8.500v4"/></g><path d="M23.500 13.500v14" stroke="#f3f2f1" stroke-width="4"/><path d="M23.500 12.800v15M17.700 18.300l5.800 -5.800 5.800 5.800" fill="none" stroke="#3a88d0" stroke-width="1.500"/></svg>
<span class="t" style="left:835.40px;top:112.14px;font-size:11.85px;line-height:13.25px;color:#484746;letter-spacing:-0.211px;">Publish</span>
<span class="t" style="left:841.90px;top:150.72px;font-size:11.00px;line-height:12.30px;color:#565453;letter-spacing:-0.250px;transform:scaleX(0.8606);transform-origin:0 50%;">Share</span>
<div class="r" style="left:54.00px;top:166.00px;width:1.00px;height:833.50px;background:#c8c8c8;"></div>
<div class="r" style="left:54.00px;top:165.80px;width:1084.00px;height:1.00px;background:#cfcfcf;"></div>
<div class="r" style="left:1137.30px;top:166.00px;width:1.00px;height:833.50px;background:#c8c8c8;"></div>
<div class="r" style="left:54.00px;top:998.50px;width:1084.00px;height:1.00px;background:#d8d8d8;"></div>
<span class="t" style="left:59.80px;top:168.92px;font-size:14.20px;line-height:15.88px;color:#c6c6c6;letter-spacing:-0.250px;">Sale Price and Profit by Country and Segment</span>
<svg class="r" style="left:1061.00px;top:172.00px;" width="17" height="14" viewBox="0 0 17 14" preserveAspectRatio="none"><path d="M0.800 0.700h15.400L10 7.600V13.300H7V7.600z" fill="none" stroke="#7f7f7f" stroke-width="1.1" stroke-linejoin="round"/></svg>
<svg class="r" style="left:1090.00px;top:173.20px;" width="15" height="12.5" viewBox="0 0 15 12.5" preserveAspectRatio="none"><path d="M7 0.600H0.600v11.300h13.800V7.200" fill="none" stroke="#8a8a8a" stroke-width="1.1"/><path d="M0.600 7.600h6.200v4.300" fill="none" stroke="#8a8a8a" stroke-width="1.1"/><path d="M9 6l5.200 -5.200M10 0.600h4.400v4.400" fill="none" stroke="#8a8a8a" stroke-width="1.1"/></svg>
<div class="r" style="left:1118.15px;top:177.15px;width:2.50px;height:2.50px;background:#606060;border-radius:50%;"></div>
<div class="r" style="left:1124.25px;top:177.15px;width:2.50px;height:2.50px;background:#606060;border-radius:50%;"></div>
<div class="r" style="left:1130.25px;top:177.15px;width:2.50px;height:2.50px;background:#606060;border-radius:50%;"></div>
<span class="t" style="left:59.80px;top:199.12px;font-size:12.60px;line-height:14.09px;color:#605e5c;font-weight:bold;letter-spacing:-0.250px;transform:scaleX(0.9572);transform-origin:0 50%;">Segment</span>
<div class="r" style="left:118.80px;top:200.60px;width:11.20px;height:11.20px;background:#499bd8;border-radius:50%;"></div>
<span class="t" style="left:132.40px;top:199.12px;font-size:12.60px;line-height:14.09px;color:#777676;letter-spacing:-0.250px;transform:scaleX(0.9713);transform-origin:0 50%;">Channel Partners</span>
<div class="r" style="left:230.10px;top:200.60px;width:11.20px;height:11.20px;background:#4b5c80;border-radius:50%;"></div>
<span class="t" style="left:244.00px;top:199.12px;font-size:12.60px;line-height:14.09px;color:#777676;letter-spacing:-0.250px;transform:scaleX(0.9732);transform-origin:0 50%;">Enterprise</span>
<div class="r" style="left:304.10px;top:200.60px;width:11.20px;height:11.20px;background:#f2c80f;border-radius:50%;"></div>
<span class="t" style="left:317.70px;top:199.12px;font-size:12.60px;line-height:14.09px;color:#777676;letter-spacing:-0.250px;transform:scaleX(0.9928);transform-origin:0 50%;">Government</span>
<div class="r" style="left:391.10px;top:200.60px;width:11.20px;height:11.20px;background:#e8743b;border-radius:50%;"></div>
<span class="t" style="left:405.00px;top:199.12px;font-size:12.60px;line-height:14.09px;color:#777676;letter-spacing:-0.064px;">Midmarket</span>
<div class="r" style="left:470.10px;top:200.60px;width:11.20px;height:11.20px;background:#2bae7d;border-radius:50%;"></div>
<span class="t" style="left:483.70px;top:199.12px;font-size:12.60px;line-height:14.09px;color:#777676;letter-spacing:-0.250px;transform:scaleX(0.9411);transform-origin:0 50%;">Small Business</span>
<div class="r" style="left:568.10px;top:200.60px;width:11.20px;height:11.20px;background:#9bccf3;border-radius:50%;"></div>
<span class="t" style="left:582.00px;top:199.12px;font-size:12.60px;line-height:14.09px;color:#777676;letter-spacing:-0.142px;">Profit</span>
<div class="r" style="left:85.60px;top:966.90px;width:1008.40px;height:1.20px;background:#eeeeee;"></div>
<span class="t" style="left:59.80px;top:960.62px;font-size:12.60px;line-height:14.09px;color:#9a9a9a;letter-spacing:-0.250px;transform:scaleX(0.9234);transform-origin:0 50%;">0K</span>
<div class="r" style="left:85.60px;top:874.90px;width:1008.40px;height:1.20px;background:#eeeeee;"></div>
<span class="t" style="left:59.80px;top:868.62px;font-size:12.60px;line-height:14.09px;color:#9a9a9a;letter-spacing:-0.250px;transform:scaleX(0.9234);transform-origin:0 50%;">1K</span>
<div class="r" style="left:85.60px;top:782.90px;width:1008.40px;height:1.20px;background:#eeeeee;"></div>
<span class="t" style="left:59.80px;top:776.62px;font-size:12.60px;line-height:14.09px;color:#9a9a9a;letter-spacing:-0.250px;transform:scaleX(0.9234);transform-origin:0 50%;">2K</span>
<div class="r" style="left:85.60px;top:690.90px;width:1008.40px;height:1.20px;background:#eeeeee;"></div>
<span class="t" style="left:59.80px;top:684.62px;font-size:12.60px;line-height:14.09px;color:#9a9a9a;letter-spacing:-0.250px;transform:scaleX(0.9234);transform-origin:0 50%;">3K</span>
<div class="r" style="left:85.60px;top:598.90px;width:1008.40px;height:1.20px;background:#eeeeee;"></div>
<span class="t" style="left:59.80px;top:592.62px;font-size:12.60px;line-height:14.09px;color:#9a9a9a;letter-spacing:-0.250px;transform:scaleX(0.9234);transform-origin:0 50%;">4K</span>
<div class="r" style="left:85.60px;top:506.90px;width:1008.40px;height:1.20px;background:#eeeeee;"></div>
<span class="t" style="left:59.80px;top:500.62px;font-size:12.60px;line-height:14.09px;color:#9a9a9a;letter-spacing:-0.250px;transform:scaleX(0.9234);transform-origin:0 50%;">5K</span>
<div class="r" style="left:85.60px;top:414.90px;width:1008.40px;height:1.20px;background:#eeeeee;"></div>
<span class="t" style="left:59.80px;top:408.62px;font-size:12.60px;line-height:14.09px;color:#9a9a9a;letter-spacing:-0.250px;transform:scaleX(0.9234);transform-origin:0 50%;">6K</span>
<div class="r" style="left:85.60px;top:322.90px;width:1008.40px;height:1.20px;background:#eeeeee;"></div>
<span class="t" style="left:59.80px;top:316.62px;font-size:12.60px;line-height:14.09px;color:#9a9a9a;letter-spacing:-0.250px;transform:scaleX(0.9234);transform-origin:0 50%;">7K</span>
<div class="r" style="left:85.60px;top:230.90px;width:1008.40px;height:1.20px;background:#eeeeee;"></div>
<span class="t" style="left:59.80px;top:224.62px;font-size:12.60px;line-height:14.09px;color:#9a9a9a;letter-spacing:-0.250px;transform:scaleX(0.9234);transform-origin:0 50%;">8K</span>
<div class="r" style="left:1087.00px;top:967.00px;width:7.00px;height:1.00px;background:#e4e4e4;"></div>
<span class="t" style="left:1105.60px;top:961.22px;font-size:12.60px;line-height:14.09px;color:#9a9a9a;letter-spacing:-0.250px;transform:scaleX(0.9794);transform-origin:0 50%;">0.0M</span>
<div class="r" style="left:1087.00px;top:869.64px;width:7.00px;height:1.00px;background:#e4e4e4;"></div>
<span class="t" style="left:1105.60px;top:863.86px;font-size:12.60px;line-height:14.09px;color:#9a9a9a;letter-spacing:-0.250px;transform:scaleX(0.9794);transform-origin:0 50%;">0.5M</span>
<div class="r" style="left:1087.00px;top:772.28px;width:7.00px;height:1.00px;background:#e4e4e4;"></div>
<span class="t" style="left:1105.60px;top:766.50px;font-size:12.60px;line-height:14.09px;color:#9a9a9a;letter-spacing:-0.250px;transform:scaleX(0.9794);transform-origin:0 50%;">1.0M</span>
<div class="r" style="left:1087.00px;top:674.92px;width:7.00px;height:1.00px;background:#e4e4e4;"></div>
<span class="t" style="left:1105.60px;top:669.14px;font-size:12.60px;line-height:14.09px;color:#9a9a9a;letter-spacing:-0.250px;transform:scaleX(0.9794);transform-origin:0 50%;">1.5M</span>
<div class="r" style="left:1087.00px;top:577.56px;width:7.00px;height:1.00px;background:#e4e4e4;"></div>
<span class="t" style="left:1105.60px;top:571.78px;font-size:12.60px;line-height:14.09px;color:#9a9a9a;letter-spacing:-0.250px;transform:scaleX(0.9794);transform-origin:0 50%;">2.0M</span>
<div class="r" style="left:1087.00px;top:480.20px;width:7.00px;height:1.00px;background:#e4e4e4;"></div>
<span class="t" style="left:1105.60px;top:474.42px;font-size:12.60px;line-height:14.09px;color:#9a9a9a;letter-spacing:-0.250px;transform:scaleX(0.9794);transform-origin:0 50%;">2.5M</span>
<div class="r" style="left:1087.00px;top:382.84px;width:7.00px;height:1.00px;background:#e4e4e4;"></div>
<span class="t" style="left:1105.60px;top:377.06px;font-size:12.60px;line-height:14.09px;color:#9a9a9a;letter-spacing:-0.250px;transform:scaleX(0.9794);transform-origin:0 50%;">3.0M</span>
<div class="r" style="left:1087.00px;top:285.48px;width:7.00px;height:1.00px;background:#e4e4e4;"></div>
<span class="t" style="left:1105.60px;top:279.70px;font-size:12.60px;line-height:14.09px;color:#9a9a9a;letter-spacing:-0.250px;transform:scaleX(0.9794);transform-origin:0 50%;">3.5M</span>
<svg class="r" style="left:0.00px;top:0.00px;pointer-events:none;" width="1921" height="1074" viewBox="0 0 1921 1074" preserveAspectRatio="none"><rect x="157.25" y="945.14" width="27.80" height="22.36" fill="rgba(70,145,218,0.4)"/><rect x="185.05" y="737.78" width="27.80" height="229.72" fill="rgba(70,85,138,0.4)"/><rect x="212.85" y="274.00" width="27.80" height="693.50" fill="rgba(240,195,15,0.4)"/><rect x="240.65" y="939.99" width="27.80" height="27.51" fill="rgba(218,88,85,0.4)"/><rect x="268.45" y="415.50" width="27.80" height="552.00" fill="rgba(53,170,123,0.4)"/><rect x="337.25" y="945.14" width="27.80" height="22.36" fill="rgba(70,145,218,0.4)"/><rect x="365.05" y="737.78" width="27.80" height="229.72" fill="rgba(70,85,138,0.4)"/><rect x="392.85" y="274.00" width="27.80" height="693.50" fill="rgba(240,195,15,0.4)"/><rect x="420.65" y="939.99" width="27.80" height="27.51" fill="rgba(218,88,85,0.4)"/><rect x="448.45" y="415.50" width="27.80" height="552.00" fill="rgba(53,170,123,0.4)"/><rect x="517.25" y="945.14" width="27.80" height="22.36" fill="rgba(70,145,218,0.4)"/><rect x="545.05" y="737.78" width="27.80" height="229.72" fill="rgba(70,85,138,0.4)"/><rect x="572.85" y="274.00" width="27.80" height="693.50" fill="rgba(240,195,15,0.4)"/><rect x="600.65" y="939.99" width="27.80" height="27.51" fill="rgba(218,88,85,0.4)"/><rect x="628.45" y="415.50" width="27.80" height="552.00" fill="rgba(53,170,123,0.4)"/><rect x="697.25" y="945.14" width="27.80" height="22.36" fill="rgba(70,145,218,0.4)"/><rect x="725.05" y="737.78" width="27.80" height="229.72" fill="rgba(70,85,138,0.4)"/><rect x="752.85" y="274.00" width="27.80" height="693.50" fill="rgba(240,195,15,0.4)"/><rect x="780.65" y="939.99" width="27.80" height="27.51" fill="rgba(218,88,85,0.4)"/><rect x="808.45" y="415.50" width="27.80" height="552.00" fill="rgba(53,170,123,0.4)"/><rect x="877.25" y="945.14" width="27.80" height="22.36" fill="rgba(70,145,218,0.4)"/><rect x="905.05" y="737.78" width="27.80" height="229.72" fill="rgba(70,85,138,0.4)"/><rect x="932.85" y="274.00" width="27.80" height="693.50" fill="rgba(240,195,15,0.4)"/><rect x="960.65" y="939.99" width="27.80" height="27.51" fill="rgba(218,88,85,0.4)"/><rect x="988.45" y="415.50" width="27.80" height="552.00" fill="#31ad7e"/></svg>
<svg class="r" style="left:0.00px;top:0.00px;pointer-events:none;" width="1921" height="1074" viewBox="0 0 1921 1074" preserveAspectRatio="none"><path d="M228.75 281.00 L409.40 231.70 L589.75 251.30 L769.10 401.60 L950.20 384.60" fill="none" stroke="#93c6f1" stroke-width="2.4" stroke-linejoin="round" stroke-linecap="round"/></svg>
<span class="t" style="left:209.40px;top:973.52px;font-size:12.60px;line-height:14.09px;color:#777676;letter-spacing:-0.250px;transform:scaleX(0.9327);transform-origin:0 50%;">Canada</span>
<span class="t" style="left:391.40px;top:973.52px;font-size:12.60px;line-height:14.09px;color:#777676;letter-spacing:-0.250px;transform:scaleX(0.9482);transform-origin:0 50%;">France</span>
<span class="t" style="left:564.40px;top:973.52px;font-size:12.60px;line-height:14.09px;color:#777676;letter-spacing:-0.250px;transform:scaleX(0.9937);transform-origin:0 50%;">Germany</span>
<span class="t" style="left:749.90px;top:973.52px;font-size:12.60px;line-height:14.09px;color:#777676;letter-spacing:-0.182px;">Mexico</span>
<span class="t" style="left:881.90px;top:973.52px;font-size:12.60px;line-height:14.09px;color:#777676;letter-spacing:-0.159px;">United States of America</span>
<div class="r" style="left:52.70px;top:165.90px;width:9.40px;height:1.80px;background:#8a8a8a;"></div>
<div class="r" style="left:52.70px;top:165.90px;width:3.30px;height:8.30px;background:#8a8a8a;"></div>
<div class="r" style="left:1130.00px;top:165.90px;width:9.70px;height:1.80px;background:#8a8a8a;"></div>
<div class="r" style="left:1136.20px;top:165.90px;width:3.50px;height:8.10px;background:#8a8a8a;"></div>
<div class="r" style="left:52.50px;top:998.30px;width:10.00px;height:2.60px;background:#8a8a8a;"></div>
<div class="r" style="left:52.50px;top:991.80px;width:3.20px;height:9.00px;background:#8a8a8a;"></div>
<div class="r" style="left:1129.00px;top:998.30px;width:11.00px;height:2.60px;background:#8a8a8a;"></div>
<div class="r" style="left:1136.30px;top:991.80px;width:3.50px;height:9.00px;background:#8a8a8a;"></div>
<div class="r" style="left:590.00px;top:165.90px;width:12.00px;height:2.00px;background:#8a8a8a;"></div>
<div class="r" style="left:590.00px;top:998.00px;width:12.00px;height:2.60px;background:#8a8a8a;"></div>
<div class="r" style="left:52.50px;top:577.00px;width:3.00px;height:12.00px;background:#8a8a8a;"></div>
<div class="r" style="left:1136.30px;top:577.00px;width:3.00px;height:12.00px;background:#8a8a8a;"></div>
<div class="r" style="left:1145.00px;top:171.80px;width:376.00px;height:78.40px;background:#505050;"></div>
<div class="r" style="left:1145.00px;top:250.00px;width:376.00px;height:75.40px;background:#f75b10;"></div>
<span class="t" style="left:1226.30px;top:272.39px;font-size:29.20px;line-height:32.65px;color:#ffffff;font-weight:bold;letter-spacing:0.037px;">Product Details</span>
<div class="r" style="left:1145.00px;top:379.50px;width:366.00px;height:537.80px;background:#ffffff;"></div>
<div class="r" style="left:1144.20px;top:379.50px;width:1.00px;height:537.80px;background:#dcdcdc;"></div>
<div class="r" style="left:1511.00px;top:379.50px;width:10.00px;height:537.80px;background:#f0f0f0;"></div>
<div class="r" style="left:1511.60px;top:388.60px;width:8.90px;height:7.20px;background:#c2c2c2;"></div>
<svg class="r" style="left:1513.50px;top:381.50px;" width="6" height="4" viewBox="0 0 6 4" preserveAspectRatio="none"><path d="M0.500 3.500L3 0.800 5.500 3.500z" fill="#a0a0a0"/></svg>
<div class="r" style="left:1515.50px;top:910.50px;width:1.60px;height:1.60px;background:#555;"></div>
<div class="r" style="left:1145.00px;top:325.2px;width:376.00px;height:54.5px;background:#ececec;border:1.3px solid #3f4c63;box-sizing:border-box;border-radius:2px;"></div>
<svg class="r" style="left:1154.00px;top:339.00px;" width="26" height="26" viewBox="0 0 26 26" preserveAspectRatio="none"><circle cx="8.300" cy="9" r="6.600" fill="none" stroke="#323c4e" stroke-width="1.7"/><path d="M13 14l10.500 10" fill="none" stroke="#323c4e" stroke-width="1.8"/></svg>
<span class="t" style="left:1189.80px;top:344.87px;font-size:16.60px;line-height:18.56px;color:#858585;letter-spacing:-0.099px;">Search Here</span>
<span class="t" style="left:1158.40px;top:382.90px;font-size:16.50px;line-height:18.45px;color:#1f1f1f;letter-spacing:0.192px;-webkit-text-stroke:0.55px #1f1f1f;">United States of America</span>
<span class="t" style="left:1158.40px;top:408.80px;font-size:16.50px;line-height:18.45px;color:#3f3f3f;letter-spacing:-0.250px;transform:scaleX(0.9935);transform-origin:0 50%;">Montana: January: Small Business</span>
<svg class="r" style="left:1494.00px;top:401.77px;" width="14" height="24" viewBox="0 0 14 24" preserveAspectRatio="none"><path d="M1.200 1.200L12.000 12 1.200 22.800" fill="none" stroke="#2f3b52" stroke-width="1.900"/></svg>
<div class="r" style="left:1145.00px;top:447.95px;width:366.00px;height:1.10px;background:#868c98;"></div>
<span class="t" style="left:1158.40px;top:452.73px;font-size:16.50px;line-height:18.45px;color:#1f1f1f;letter-spacing:0.192px;-webkit-text-stroke:0.55px #1f1f1f;">United States of America</span>
<span class="t" style="left:1158.40px;top:478.63px;font-size:16.50px;line-height:18.45px;color:#3f3f3f;letter-spacing:-0.250px;transform:scaleX(0.9784);transform-origin:0 50%;">Velo: January: Small Business</span>
<svg class="r" style="left:1494.00px;top:471.60px;" width="14" height="24" viewBox="0 0 14 24" preserveAspectRatio="none"><path d="M1.200 1.200L12.000 12 1.200 22.800" fill="none" stroke="#2f3b52" stroke-width="1.900"/></svg>
<div class="r" style="left:1145.00px;top:517.78px;width:366.00px;height:1.10px;background:#868c98;"></div>
<span class="t" style="left:1158.40px;top:522.56px;font-size:16.50px;line-height:18.45px;color:#1f1f1f;letter-spacing:0.192px;-webkit-text-stroke:0.55px #1f1f1f;">United States of America</span>
<span class="t" style="left:1158.40px;top:548.46px;font-size:16.50px;line-height:18.45px;color:#3f3f3f;letter-spacing:-0.250px;transform:scaleX(0.9689);transform-origin:0 50%;">VTT: January: Small Business</span>
<svg class="r" style="left:1494.00px;top:541.43px;" width="14" height="24" viewBox="0 0 14 24" preserveAspectRatio="none"><path d="M1.200 1.200L12.000 12 1.200 22.800" fill="none" stroke="#2f3b52" stroke-width="1.900"/></svg>
<div class="r" style="left:1145.00px;top:587.61px;width:366.00px;height:1.10px;background:#868c98;"></div>
<span class="t" style="left:1158.40px;top:592.39px;font-size:16.50px;line-height:18.45px;color:#1f1f1f;letter-spacing:0.192px;-webkit-text-stroke:0.55px #1f1f1f;">United States of America</span>
<span class="t" style="left:1158.40px;top:618.29px;font-size:16.50px;line-height:18.45px;color:#3f3f3f;letter-spacing:-0.250px;transform:scaleX(0.9784);transform-origin:0 50%;">Velo: January: Small Business</span>
<svg class="r" style="left:1494.00px;top:611.26px;" width="14" height="24" viewBox="0 0 14 24" preserveAspectRatio="none"><path d="M1.200 1.200L12.000 12 1.200 22.800" fill="none" stroke="#2f3b52" stroke-width="1.900"/></svg>
<div class="r" style="left:1145.00px;top:657.44px;width:366.00px;height:1.10px;background:#868c98;"></div>
<span class="t" style="left:1158.40px;top:662.22px;font-size:16.50px;line-height:18.45px;color:#1f1f1f;letter-spacing:0.192px;-webkit-text-stroke:0.55px #1f1f1f;">United States of America</span>
<span class="t" style="left:1158.40px;top:688.12px;font-size:16.50px;line-height:18.45px;color:#3f3f3f;letter-spacing:-0.250px;transform:scaleX(0.9689);transform-origin:0 50%;">VTT: January: Small Business</span>
<svg class="r" style="left:1494.00px;top:681.09px;" width="14" height="24" viewBox="0 0 14 24" preserveAspectRatio="none"><path d="M1.200 1.200L12.000 12 1.200 22.800" fill="none" stroke="#2f3b52" stroke-width="1.900"/></svg>
<div class="r" style="left:1145.00px;top:727.27px;width:366.00px;height:1.10px;background:#868c98;"></div>
<span class="t" style="left:1158.40px;top:732.05px;font-size:16.50px;line-height:18.45px;color:#1f1f1f;letter-spacing:0.192px;-webkit-text-stroke:0.55px #1f1f1f;">United States of America</span>
<span class="t" style="left:1158.40px;top:757.95px;font-size:16.50px;line-height:18.45px;color:#3f3f3f;letter-spacing:-0.250px;transform:scaleX(0.9714);transform-origin:0 50%;">Paseo: January: Small Business</span>
<svg class="r" style="left:1494.00px;top:750.92px;" width="14" height="24" viewBox="0 0 14 24" preserveAspectRatio="none"><path d="M1.200 1.200L12.000 12 1.200 22.800" fill="none" stroke="#2f3b52" stroke-width="1.900"/></svg>
<div class="r" style="left:1145.00px;top:797.10px;width:366.00px;height:1.10px;background:#868c98;"></div>
<span class="t" style="left:1158.40px;top:801.88px;font-size:16.50px;line-height:18.45px;color:#1f1f1f;letter-spacing:0.192px;-webkit-text-stroke:0.55px #1f1f1f;">United States of America</span>
<span class="t" style="left:1158.40px;top:827.78px;font-size:16.50px;line-height:18.45px;color:#3f3f3f;letter-spacing:-0.250px;transform:scaleX(0.9689);transform-origin:0 50%;">VTT: January: Small Business</span>
<svg class="r" style="left:1494.00px;top:820.75px;" width="14" height="24" viewBox="0 0 14 24" preserveAspectRatio="none"><path d="M1.200 1.200L12.000 12 1.200 22.800" fill="none" stroke="#2f3b52" stroke-width="1.900"/></svg>
<div class="r" style="left:1145.00px;top:866.93px;width:366.00px;height:1.10px;background:#868c98;"></div>
<span class="t" style="left:1158.40px;top:871.71px;font-size:16.50px;line-height:18.45px;color:#1f1f1f;letter-spacing:0.192px;-webkit-text-stroke:0.55px #1f1f1f;">United States of America</span>
<span class="t" style="left:1158.40px;top:897.61px;font-size:16.50px;line-height:18.45px;color:#3f3f3f;letter-spacing:-0.250px;transform:scaleX(0.9904);transform-origin:0 50%;">Amarilla: January: Small Business</span>
<svg class="r" style="left:1494.00px;top:890.58px;" width="14" height="24" viewBox="0 0 14 24" preserveAspectRatio="none"><path d="M1.200 1.200L12.000 12 1.200 22.800" fill="none" stroke="#2f3b52" stroke-width="1.900"/></svg>
<div class="r" style="left:1145.00px;top:917.30px;width:376.00px;height:77.50px;background:#505050;"></div>
<div class="r" style="left:1560.00px;top:165.30px;width:180.00px;height:893.70px;background:#f3f2f1;"></div>
<span class="t" style="left:1572.20px;top:182.01px;font-size:16.00px;line-height:17.89px;color:#3b3a39;letter-spacing:0.058px;-webkit-text-stroke:0.35px #3b3a39;">Visualizations</span>
<svg class="r" style="left:1720.00px;top:184.00px;" width="8" height="13" viewBox="0 0 8 13" preserveAspectRatio="none"><path d="M1 0.700l5.800 5.800L1 12.300" fill="none" stroke="#605e5c" stroke-width="1.200"/></svg>
<svg class="r" style="left:1569.00px;top:219.00px;" width="17" height="17" viewBox="0 0 17 17" preserveAspectRatio="none"><path d="M0.800 0v16.200H17" fill="none" stroke="#605e5c" stroke-width="1.500"/><rect x="1.500" y="2.500" width="4" height="3.500" fill="#fbfbfb" stroke="#605e5c"/><rect x="5.500" y="2.500" width="5.500" height="3.500" fill="#7ab5ea" stroke="#3a88d0"/><rect x="1.500" y="9.500" width="7" height="3.500" fill="#fbfbfb" stroke="#605e5c"/><rect x="8.500" y="9.500" width="6" height="3.500" fill="#c3c2c1" stroke="#a9a8a7"/></svg>
<svg class="r" style="left:1597.00px;top:219.00px;" width="17" height="17" viewBox="0 0 17 17" preserveAspectRatio="none"><path d="M0.800 0v16.200H17" fill="none" stroke="#605e5c" stroke-width="1.500"/><rect x="3.500" y="5.500" width="3.500" height="5.500" fill="#7ab5ea" stroke="#3a88d0"/><rect x="3.500" y="11" width="3.500" height="4.500" fill="#fbfbfb" stroke="#605e5c"/><rect x="10.500" y="2.500" width="3.500" height="7" fill="#c3c2c1" stroke="#a9a8a7"/><rect x="10.500" y="9.500" width="3.500" height="6" fill="#fbfbfb" stroke="#605e5c"/></svg>
<svg class="r" style="left:1625.00px;top:219.00px;" width="17" height="17" viewBox="0 0 17 17" preserveAspectRatio="none"><path d="M0.800 0v16.200H17" fill="none" stroke="#605e5c" stroke-width="1.500"/><rect x="1.500" y="1" width="15" height="3.300" fill="#7ab5ea" stroke="#3a88d0"/><rect x="1.500" y="4.800" width="9" height="3" fill="#fbfbfb" stroke="#605e5c"/><rect x="1.500" y="8.300" width="6.500" height="3" fill="#c3c2c1" stroke="#a9a8a7"/><rect x="1.500" y="11.800" width="11" height="3" fill="#fbfbfb" stroke="#605e5c"/></svg>
<svg class="r" style="left:1653.00px;top:219.00px;" width="17" height="17" viewBox="0 0 17 17" preserveAspectRatio="none"><path d="M0.800 0v16.200H17" fill="none" stroke="#605e5c" stroke-width="1.500"/><rect x="2.500" y="1.500" width="3.300" height="14" fill="#7ab5ea" stroke="#3a88d0"/><rect x="6.300" y="7.500" width="3" height="8" fill="#fbfbfb" stroke="#605e5c"/><rect x="9.800" y="10" width="3" height="5.500" fill="#c3c2c1" stroke="#a9a8a7"/><rect x="13.300" y="4.500" width="3" height="11" fill="#fbfbfb" stroke="#605e5c"/></svg>
<svg class="r" style="left:1681.00px;top:219.00px;" width="17" height="17" viewBox="0 0 17 17" preserveAspectRatio="none"><path d="M0.800 0v16.200H17" fill="none" stroke="#605e5c" stroke-width="1.500"/><rect x="1.500" y="2.500" width="3" height="3.500" fill="#fbfbfb" stroke="#605e5c"/><rect x="4.500" y="2.500" width="10" height="3.500" fill="#7ab5ea" stroke="#3a88d0"/><rect x="1.500" y="9.500" width="9" height="3.500" fill="#fbfbfb" stroke="#605e5c"/><rect x="10.500" y="9.500" width="4" height="3.500" fill="#c3c2c1" stroke="#a9a8a7"/></svg>
<svg class="r" style="left:1709.00px;top:219.00px;" width="17" height="17" viewBox="0 0 17 17" preserveAspectRatio="none"><path d="M0.800 0v16.200H17" fill="none" stroke="#605e5c" stroke-width="1.500"/><rect x="3.500" y="2.500" width="4" height="10.500" fill="#7ab5ea" stroke="#3a88d0"/><rect x="3.500" y="13" width="4" height="2.500" fill="#fbfbfb" stroke="#605e5c"/><rect x="10.500" y="2.500" width="4" height="4.500" fill="#c3c2c1" stroke="#a9a8a7"/><rect x="10.500" y="7" width="4" height="8.500" fill="#fbfbfb" stroke="#605e5c"/></svg>
<svg class="r" style="left:1569.00px;top:243.00px;" width="17" height="17" viewBox="0 0 17 17" preserveAspectRatio="none"><path d="M0.800 0v16.200H17" fill="none" stroke="#605e5c" stroke-width="1.500"/><path d="M1.500 10l4.500 -5 4 3.500 6 -5.500" fill="none" stroke="#3b3a39" stroke-width="1.200"/><path d="M1.500 13l9 -9.500 6 5.500" fill="none" stroke="#3a88d0" stroke-width="1.300"/></svg>
<svg class="r" style="left:1597.00px;top:243.00px;" width="17" height="17" viewBox="0 0 17 17" preserveAspectRatio="none"><path d="M10.200 7L13 0.800 16.500 8.400V16.200z" fill="#c3c2c1" stroke="#a9a8a7" stroke-width="0.900"/><path d="M0.600 10.500L4.600 13.200 10.200 7 16.500 16.200H0.600z" fill="#7ab5ea" stroke="#3a88d0" stroke-width="1.100" stroke-linejoin="round"/><path d="M0.600 10.300L6 1.800 10.200 7 4.600 13.200z" fill="#fbfbfb"/><path d="M0.600 10.300L6 1.800 10.200 7" fill="none" stroke="#3b3a39" stroke-width="1.100"/></svg>
<svg class="r" style="left:1625.00px;top:243.00px;" width="17" height="17" viewBox="0 0 17 17" preserveAspectRatio="none"><path d="M1.200 10L6 13.400 11.500 8.400 16.800 12.800V16H1.200z" fill="#fbfbfb"/><path d="M0.800 0v16.200H17" fill="none" stroke="#605e5c" stroke-width="1.500"/><path d="M1.200 3.900L6 8.100 11.500 2.500 16.800 5.600V12.800L11.500 8.400 6 13.400 1.200 10z" fill="#7ab5ea" stroke="#3a88d0" stroke-width="1.100"/></svg>
<svg class="r" style="left:1653.00px;top:243.00px;" width="17" height="17" viewBox="0 0 17 17" preserveAspectRatio="none"><path d="M0.800 0v16.200H17" fill="none" stroke="#605e5c" stroke-width="1.500"/><rect x="3.500" y="2.500" width="4" height="13" fill="#7ab5ea" stroke="#3a88d0"/><rect x="10.500" y="2.500" width="3.500" height="5" fill="#c3c2c1" stroke="#a9a8a7"/><rect x="10.500" y="7.500" width="3.500" height="8" fill="#fbfbfb" stroke="#605e5c"/><path d="M1.500 14.500l4.500 -5.500 4 5 6.500 -9" fill="none" stroke="#3b3a39" stroke-width="1.200"/></svg>
<svg class="r" style="left:1681.00px;top:243.00px;" width="17" height="17" viewBox="0 0 17 17" preserveAspectRatio="none"><rect x="-0.950" y="-1.600" width="19.550" height="19.600" fill="#d0cfce" stroke="#595857" stroke-width="2"/><path d="M0.800 0v16.200H17" fill="none" stroke="#605e5c" stroke-width="1.500"/><rect x="3.300" y="9.500" width="3.300" height="6" fill="#7ab5ea" stroke="#3a88d0"/><rect x="7.300" y="2.500" width="3.300" height="13" fill="#fbfbfb" stroke="#605e5c"/><rect x="11.300" y="6.500" width="3.300" height="9" fill="#c3c2c1" stroke="#8a8988"/><path d="M1.500 14.500l4.500 -5.500 4 5 6.500 -9" fill="none" stroke="#3b3a39" stroke-width="1.200"/></svg>
<svg class="r" style="left:1709.00px;top:243.00px;" width="17" height="17" viewBox="0 0 17 17" preserveAspectRatio="none"><path d="M0.800 0v16.200H17" fill="none" stroke="#605e5c" stroke-width="1.500"/><path d="M1.500 3.500c3 0 4 3.500 7 3.500s4 -4 8 -4v3.500c-4 0 -5 3.500 -8 3.500s-4 -3 -7 -3z" fill="#c3c2c1" stroke="#a9a8a7" stroke-width="0.800"/><path d="M1.500 7c3 0 4 4 7 4s4 -4.500 8 -4.500V10c-4 0 -5 4.500 -8 4.500s-4 -4 -7 -4z" fill="#3a88d0" stroke="#3a88d0" stroke-width="0.800"/><circle cx="4" cy="12.500" r="1.600" fill="#f28e2b"/><circle cx="9" cy="9" r="1.300" fill="#f28e2b"/><circle cx="14.500" cy="12" r="1.600" fill="#f28e2b"/></svg>
<svg class="r" style="left:1569.00px;top:267.00px;" width="17" height="17" viewBox="0 0 17 17" preserveAspectRatio="none"><path d="M0.800 0v16.200H17" fill="none" stroke="#605e5c" stroke-width="1.500"/><rect x="2.500" y="6" width="3" height="9.500" fill="#fbfbfb" stroke="#605e5c"/><rect x="5.500" y="6" width="4" height="4.500" fill="#8a8988" stroke="#605e5c"/><rect x="9.500" y="1.500" width="2.500" height="9" fill="#7ab5ea" stroke="#3a88d0"/><rect x="12" y="1.500" width="3.500" height="14" fill="#fbfbfb" stroke="#605e5c"/></svg>
<svg class="r" style="left:1597.00px;top:267.00px;" width="17" height="17" viewBox="0 0 17 17" preserveAspectRatio="none"><rect x="0.500" y="1.500" width="16" height="4.500" fill="#7ab5ea" stroke="#3a88d0"/><rect x="2.500" y="6.500" width="12" height="4" fill="#7ab5ea" stroke="#3a88d0"/><rect x="5.500" y="11" width="6" height="4.500" fill="#7ab5ea" stroke="#3a88d0"/></svg>
<svg class="r" style="left:1625.00px;top:267.00px;" width="17" height="17" viewBox="0 0 17 17" preserveAspectRatio="none"><path d="M0.800 0v16.200H17" fill="none" stroke="#605e5c" stroke-width="1.500"/><rect x="12" y="1.500" width="2.800" height="2.800" fill="#252423"/><rect x="3.300" y="11.300" width="2.800" height="2.800" fill="#252423"/><rect x="3.500" y="4" width="2.500" height="2.500" fill="#7ab5ea"/><rect x="8" y="6.800" width="2.800" height="2.800" fill="#7ab5ea"/><rect x="12.300" y="10.500" width="2.800" height="2.800" fill="#7ab5ea"/></svg>
<svg class="r" style="left:1653.00px;top:267.00px;" width="17" height="17" viewBox="0 0 17 17" preserveAspectRatio="none"><circle cx="8.500" cy="8.500" r="7.800" fill="#fbfbfb" stroke="#3b3a39" stroke-width="1.200"/><path d="M8.500 0.700a7.800 7.800 0 0 1 5.500 13.300L8.500 8.500z" fill="#7ab5ea" stroke="#3a88d0" stroke-width="1.200"/></svg>
<svg class="r" style="left:1681.00px;top:267.00px;" width="17" height="17" viewBox="0 0 17 17" preserveAspectRatio="none"><circle cx="8.500" cy="8.500" r="5.800" fill="none" stroke="#3a88d0" stroke-width="4.600"/><circle cx="8.500" cy="8.500" r="5.800" fill="none" stroke="#7ab5ea" stroke-width="3.200"/><path d="M3 6.500A5.800 5.800 0 0 1 8.500 2.700" fill="none" stroke="#fbfbfb" stroke-width="3.200"/><path d="M0.800 7.500l4.500 1M8.500 0.500v4.500" stroke="#3a88d0" stroke-width="1"/></svg>
<svg class="r" style="left:1709.00px;top:267.00px;" width="17" height="17" viewBox="0 0 17 17" preserveAspectRatio="none"><rect x="0.700" y="0.700" width="8" height="7.800" fill="#7ab5ea" stroke="#3a88d0" stroke-width="1.200"/><rect x="0.700" y="8.500" width="8" height="7.800" fill="#7ab5ea" stroke="#3a88d0" stroke-width="1.200"/><rect x="8.700" y="0.700" width="7.600" height="4.800" fill="#fbfbfb" stroke="#605e5c" stroke-width="1.200"/><rect x="8.700" y="5.500" width="3.500" height="10.800" fill="#fbfbfb" stroke="#605e5c" stroke-width="1.200"/><rect x="12.200" y="5.500" width="4.100" height="5.400" fill="#fbfbfb" stroke="#605e5c" stroke-width="1.200"/><rect x="12.200" y="10.900" width="4.100" height="5.400" fill="#fbfbfb" stroke="#605e5c" stroke-width="1.200"/></svg>
<svg class="r" style="left:1569.00px;top:291.00px;" width="17" height="17" viewBox="0 0 17 17" preserveAspectRatio="none"><circle cx="8.500" cy="7.500" r="5.600" fill="#e9e9e9" stroke="#3b3a39" stroke-width="1.600"/><path d="M5 5.500l3 -1.500 1 2 -2 2zM9 8.500l3.500 -2 0.500 3.500 -2.500 2z" fill="#1e9a4c"/><path d="M3.500 3A7 7 0 0 0 8.500 14.500" fill="none" stroke="#605e5c" stroke-width="1"/><path d="M8.500 13v3M3.500 16.300h10" stroke="#605e5c" stroke-width="1.400"/></svg>
<svg class="r" style="left:1597.00px;top:291.00px;" width="17" height="17" viewBox="0 0 17 17" preserveAspectRatio="none"><path d="M1 1.500l4 0.500 3 2 4 -2.500h4.500v7l-3 4.500 -5 3.500 -5 -3 -2.500 -5z" fill="#c3c2c1" stroke="#8a8988" stroke-width="1"/><path d="M1 1.500l4 0.500 2 4 -1.500 3.500 -4 -1z" fill="#7ab5ea" stroke="#3a88d0" stroke-width="0.800"/><path d="M9 10l4 -2 3.500 0.500 -3 4.500 -4.500 3z" fill="#7ab5ea" stroke="#3a88d0" stroke-width="0.800"/></svg>
<svg class="r" style="left:1625.00px;top:291.00px;" width="17" height="17" viewBox="0 0 17 17" preserveAspectRatio="none"><path d="M0.800 12.500A7.700 7.700 0 0 1 16.200 12.500h-3.400A4.300 4.300 0 0 0 4.200 12.500z" fill="#fbfbfb" stroke="#605e5c" stroke-width="1.100"/><path d="M8 4.800A7.700 7.700 0 0 1 16.200 12.500h-3.400A4.300 4.300 0 0 0 8 8.300z" fill="#7ab5ea" stroke="#3a88d0" stroke-width="1.100"/><path d="M8.500 12.300l3.500 -4" stroke="#252423" stroke-width="1.500"/></svg>
<svg class="r" style="left:1653.00px;top:291.00px;" width="17" height="17" viewBox="0 0 17 17" preserveAspectRatio="none"><rect x="0.700" y="2.700" width="15.600" height="11.600" fill="#fbfbfb" stroke="#605e5c" stroke-width="1.300"/><path d="M2.500 12.300h12" stroke="#a9a8a7" stroke-width="1"/><text x="8.500" y="10.600" font-family="Liberation Sans" font-size="7.500" text-anchor="middle" fill="#3a88d0">123</text></svg>
<svg class="r" style="left:1681.00px;top:291.00px;" width="17" height="17" viewBox="0 0 17 17" preserveAspectRatio="none"><rect x="0.700" y="0.700" width="15.600" height="15.600" fill="#fbfbfb" stroke="#605e5c" stroke-width="1.300"/><path d="M3.500 3v11" stroke="#a9a8a7" stroke-width="0.800"/><path d="M5 5h8.500M5 10.500h8.500" stroke="#3a88d0" stroke-width="1.800"/><path d="M5 7.500h4M5 13h4" stroke="#a9a8a7" stroke-width="1"/></svg>
<svg class="r" style="left:1709.00px;top:291.00px;" width="17" height="17" viewBox="0 0 17 17" preserveAspectRatio="none"><rect x="0.700" y="1.700" width="15.600" height="12.600" fill="#fbfbfb" stroke="#605e5c" stroke-width="1.300"/><path d="M2.500 11.800h12" stroke="#a9a8a7" stroke-width="1"/><path d="M3.500 9.500L6 4.800l2.500 4.700z" fill="none" stroke="#1e9a4c" stroke-width="1.200"/><path d="M9.500 4.800h5L12 9.500z" fill="none" stroke="#e8541b" stroke-width="1.200"/></svg>
<svg class="r" style="left:1569.00px;top:315.00px;" width="17" height="17" viewBox="0 0 17 17" preserveAspectRatio="none"><rect x="0.700" y="0.700" width="15" height="15" fill="#fbfbfb" stroke="#605e5c" stroke-width="1.300"/><path d="M0.700 0.700h15v2.800h-15z" fill="#a9a8a7"/><rect x="3" y="6" width="3" height="2.200" fill="#c3c2c1" stroke="#8a8988" stroke-width="0.700"/><rect x="3" y="10.300" width="3" height="2.200" fill="#c3c2c1" stroke="#8a8988" stroke-width="0.700"/><path d="M8 8.300h9.500l-3.500 4v4.300h-2.500v-4.300z" fill="#fbfbfb" stroke="#605e5c" stroke-width="1.200" stroke-linejoin="round"/></svg>
<svg class="r" style="left:1597.00px;top:315.00px;" width="17" height="17" viewBox="0 0 17 17" preserveAspectRatio="none"><rect x="0.700" y="0.700" width="15.600" height="15.600" fill="#fbfbfb" stroke="#605e5c" stroke-width="1.300"/><path d="M0.700 0.700h15.600v3h-15.600z" fill="#8a8988"/><path d="M0.700 7.800h15.600M0.700 12h15.600M6 3.700v12.600M11.200 3.700v12.600" stroke="#605e5c" stroke-width="1.100"/></svg>
<svg class="r" style="left:1625.00px;top:315.00px;" width="17" height="17" viewBox="0 0 17 17" preserveAspectRatio="none"><rect x="0.700" y="0.700" width="15.600" height="15.600" fill="#fbfbfb" stroke="#605e5c" stroke-width="1.300"/><path d="M0.700 0.700h15.600v3h-15.600z" fill="#8a8988"/><path d="M11.200 3.700h5.100v12.600h-5.100zM0.700 12h15.600v4.300H0.700z" fill="#7ab5ea"/><path d="M0.700 7.800h15.600M0.700 12h15.600M6 3.700v12.600M11.200 3.700v12.600" stroke="#605e5c" stroke-width="1.100"/></svg>
<svg class="r" style="left:1653.00px;top:315.00px;" width="17" height="17" viewBox="0 0 17 17" preserveAspectRatio="none"><text x="8.300" y="14.200" font-family="Liberation Sans" font-weight="bold" font-size="14.500" text-anchor="middle" fill="#3a88d0">R</text></svg>
<svg class="r" style="left:1681.00px;top:315.00px;" width="17" height="17" viewBox="0 0 17 17" preserveAspectRatio="none"><text x="8.300" y="11.800" font-family="Liberation Sans" font-weight="bold" font-size="14.800" text-anchor="middle" fill="#3a88d0" letter-spacing="-0.500">Py</text></svg>
<svg class="r" style="left:1709.00px;top:315.00px;" width="17" height="17" viewBox="0 0 17 17" preserveAspectRatio="none"><path d="M0.800 0v16.200H17" fill="none" stroke="#605e5c" stroke-width="1.500"/><path d="M1.500 3.500h11" stroke="#3a88d0" stroke-width="1.200"/><path d="M14 1.300l2.200 2.200L14 5.700l-2.200 -2.200z" fill="#7ab5ea" stroke="#3a88d0" stroke-width="1"/><path d="M1.500 8h9M8.500 6.300l2 1.700 -2 1.700" fill="none" stroke="#8a8988" stroke-width="1.100"/><path d="M1.500 12h5" stroke="#8a8988" stroke-width="1.100"/><circle cx="6.500" cy="12" r="1.300" fill="#8a8988"/></svg>
<svg class="r" style="left:1569.00px;top:339.00px;" width="17" height="17" viewBox="0 0 17 17" preserveAspectRatio="none"><rect x="0.500" y="6.500" width="5.500" height="3.800" fill="#7ab5ea" stroke="#3a88d0"/><rect x="10.500" y="0.800" width="5.500" height="3.800" fill="#7ab5ea" stroke="#3a88d0"/><rect x="10.500" y="6.500" width="5.500" height="3.800" fill="#7ab5ea" stroke="#3a88d0"/><rect x="10.500" y="12.200" width="5.500" height="3.800" fill="#7ab5ea" stroke="#3a88d0"/><path d="M6 8.400h4.500M10.500 2.700H8.300v11.400h2.200" fill="none" stroke="#3b3a39" stroke-width="1.300"/></svg>
<svg class="r" style="left:1597.00px;top:339.00px;" width="17" height="17" viewBox="0 0 17 17" preserveAspectRatio="none"><path d="M0.800 1.800h15.400v10.400H7l-3.800 3.500v-3.500H0.800z" fill="#fbfbfb" stroke="#3a88d0" stroke-width="1.400" stroke-linejoin="round"/></svg>
<svg class="r" style="left:1625.00px;top:339.00px;" width="17" height="17" viewBox="0 0 17 17" preserveAspectRatio="none"><path d="M0.800 1h15.400v15.400H0.800z" fill="#fbfbfb" stroke="#3a88d0" stroke-width="1.500"/><path d="M16 3c-3 0 -4 2 -4 4s-1.500 2 -3 3 -1 3.500 -2.500 6h9.500z" fill="#7ab5ea"/><path d="M2.800 -0.500a2.300 2.300 0 0 1 2.300 2.300c0 2 -2.300 5 -2.300 5s-2.300 -3 -2.300 -5a2.300 2.300 0 0 1 2.300 -2.300z" fill="#e8641b"/><circle cx="2.800" cy="2" r="0.800" fill="#fff"/><circle cx="14.800" cy="14.500" r="2.400" fill="#e8641b"/><circle cx="16.500" cy="9.800" r="1.200" fill="#e8641b"/></svg>
<svg class="r" style="left:1653.00px;top:339.00px;" width="17" height="17" viewBox="0 0 17 17" preserveAspectRatio="none"><path d="M2 13.500H1.500a1.200 1.200 0 0 1 -1 -1.200V4.500a1.200 1.200 0 0 1 1.200 -1.200h13.600a1.200 1.200 0 0 1 1.200 1.200v7.800a1.200 1.200 0 0 1 -1.200 1.200H15" fill="none" stroke="#3b3a39" stroke-width="1.300"/><path d="M6.500 9.300l3.300 3.300 -3.300 3.300 -3.300 -3.300z" fill="none" stroke="#252423" stroke-width="1.300"/><path d="M12.300 9.500l1.800 1.800 -1.800 1.800 -1.800 -1.800zM11 13.500l1.300 1.300 -1.300 1.300 -1.300 -1.300z" fill="#252423"/></svg>
<div class="r" style="left:1682.40px;top:345.20px;width:1.80px;height:1.80px;background:#3b3a39;border-radius:50%;"></div>
<div class="r" style="left:1688.50px;top:345.20px;width:1.80px;height:1.80px;background:#3b3a39;border-radius:50%;"></div>
<div class="r" style="left:1694.60px;top:345.20px;width:1.80px;height:1.80px;background:#3b3a39;border-radius:50%;"></div>
<div class="r" style="left:1560.00px;top:359.80px;width:180.00px;height:1.00px;background:#e1dfdd;"></div>
<svg class="r" style="left:1582.00px;top:368.00px;" width="20" height="20" viewBox="0 0 20 20" preserveAspectRatio="none"><path d="M0 0.800h16" stroke="#8a8988" stroke-width="1.500"/><path d="M0.700 4h19v15.300h-19zM0.700 9h19M0.700 14h19" fill="none" stroke="#252423" stroke-width="1.300" stroke-dasharray="1.700 1.200"/></svg>
<svg class="r" style="left:1623.00px;top:368.00px;" width="19" height="21" viewBox="0 0 19 21" preserveAspectRatio="none"><rect x="0.700" y="0.700" width="14.500" height="4.300" rx="1" fill="none" stroke="#3b3a39" stroke-width="1.200"/><path d="M15.200 2.800h2.500v5.200H8.500v3.500" fill="none" stroke="#3b3a39" stroke-width="1.200"/><rect x="6.500" y="11.500" width="4" height="8.500" fill="none" stroke="#3b3a39" stroke-width="1.200"/></svg>
<svg class="r" style="left:1662.00px;top:368.00px;" width="21" height="21" viewBox="0 0 21 21" preserveAspectRatio="none"><circle cx="8.500" cy="8.500" r="7.800" fill="none" stroke="#3b3a39" stroke-width="1.200"/><path d="M14 14l6 6" stroke="#3b3a39" stroke-width="1.400"/><path d="M1.500 9l3.500 -2 3 1.500 5.500 -3.500" fill="none" stroke="#3b3a39" stroke-width="1.100"/><path d="M3.500 10.500v3M6 10.500v5M8.500 10.500v5.500M11 10.500v5M13.500 9v4" stroke="#3b3a39" stroke-width="1"/></svg>
<div class="r" style="left:1572.00px;top:392.80px;width:40.00px;height:3.40px;background:#f2c811;border-radius:1.500px;"></div>
<span class="t" style="left:1571.60px;top:404.02px;font-size:12.60px;line-height:14.09px;color:#605e5c;letter-spacing:-0.250px;transform:scaleX(0.9323);transform-origin:0 50%;">Shared axis</span>
<div class="r" style="left:1564.4px;top:424.40px;width:169.4px;height:35.60px;background:#fff;border:1.2px dotted #c2c0be;box-sizing:border-box;"></div>
<div class="r" style="left:1567px;top:428.00px;width:163.3px;height:21.80px;background:#eaeaea;border:1px solid #c6c4c2;box-sizing:border-box;"></div>
<span class="t" style="left:1571.60px;top:432.52px;font-size:12.60px;line-height:14.09px;color:#3b3a39;letter-spacing:-0.250px;transform:scaleX(0.9902);transform-origin:0 50%;">Country</span>
<svg class="r" style="left:1700.00px;top:435.60px;" width="12" height="7" viewBox="0 0 12 7" preserveAspectRatio="none"><path d="M0.600 0.600l5.300 5.300 5.300 -5.300" fill="none" stroke="#605e5c" stroke-width="1.100"/></svg>
<svg class="r" style="left:1717.50px;top:434.80px;" width="9" height="9" viewBox="0 0 9 9" preserveAspectRatio="none"><path d="M0.500 0.500l7.800 7.800M8.300 0.500l-7.800 7.800" fill="none" stroke="#3b3a39" stroke-width="1.100"/></svg>
<span class="t" style="left:1571.60px;top:472.62px;font-size:12.60px;line-height:14.09px;color:#605e5c;letter-spacing:-0.250px;transform:scaleX(0.9596);transform-origin:0 50%;">Column series</span>
<div class="r" style="left:1564.4px;top:493.00px;width:169.4px;height:28.30px;background:#fff;border:1.2px dotted #c2c0be;box-sizing:border-box;"></div>
<div class="r" style="left:1567px;top:497.20px;width:163.3px;height:21.40px;background:#eaeaea;border:1px solid #c6c4c2;box-sizing:border-box;"></div>
<span class="t" style="left:1571.60px;top:501.52px;font-size:12.60px;line-height:14.09px;color:#3b3a39;letter-spacing:-0.250px;transform:scaleX(0.9687);transform-origin:0 50%;">Segment</span>
<svg class="r" style="left:1700.00px;top:504.60px;" width="12" height="7" viewBox="0 0 12 7" preserveAspectRatio="none"><path d="M0.600 0.600l5.300 5.300 5.300 -5.300" fill="none" stroke="#605e5c" stroke-width="1.100"/></svg>
<svg class="r" style="left:1717.50px;top:503.80px;" width="9" height="9" viewBox="0 0 9 9" preserveAspectRatio="none"><path d="M0.500 0.500l7.800 7.800M8.300 0.500l-7.800 7.800" fill="none" stroke="#3b3a39" stroke-width="1.100"/></svg>
<span class="t" style="left:1571.60px;top:533.82px;font-size:12.60px;line-height:14.09px;color:#605e5c;letter-spacing:-0.250px;transform:scaleX(0.9597);transform-origin:0 50%;">Column values</span>
<div class="r" style="left:1564.4px;top:554.70px;width:169.4px;height:28.10px;background:#fff;border:1.2px dotted #c2c0be;box-sizing:border-box;"></div>
<div class="r" style="left:1567px;top:559.00px;width:163.3px;height:20.80px;background:#eaeaea;border:1px solid #c6c4c2;box-sizing:border-box;"></div>
<span class="t" style="left:1571.60px;top:563.02px;font-size:12.60px;line-height:14.09px;color:#3b3a39;letter-spacing:-0.250px;transform:scaleX(0.9134);transform-origin:0 50%;">Sale Price</span>
<svg class="r" style="left:1700.00px;top:566.10px;" width="12" height="7" viewBox="0 0 12 7" preserveAspectRatio="none"><path d="M0.600 0.600l5.300 5.300 5.300 -5.300" fill="none" stroke="#605e5c" stroke-width="1.100"/></svg>
<svg class="r" style="left:1717.50px;top:565.30px;" width="9" height="9" viewBox="0 0 9 9" preserveAspectRatio="none"><path d="M0.500 0.500l7.800 7.800M8.300 0.500l-7.800 7.800" fill="none" stroke="#3b3a39" stroke-width="1.100"/></svg>
<span class="t" style="left:1571.60px;top:595.82px;font-size:12.60px;line-height:14.09px;color:#605e5c;letter-spacing:-0.250px;transform:scaleX(0.9454);transform-origin:0 50%;">Line values</span>
<div class="r" style="left:1564.4px;top:616.40px;width:169.4px;height:35.20px;background:#fff;border:1.2px dotted #c2c0be;box-sizing:border-box;"></div>
<div class="r" style="left:1567px;top:620.80px;width:163.3px;height:20.40px;background:#eaeaea;border:1px solid #c6c4c2;box-sizing:border-box;"></div>
<span class="t" style="left:1571.60px;top:624.62px;font-size:12.60px;line-height:14.09px;color:#3b3a39;letter-spacing:-0.142px;">Profit</span>
<svg class="r" style="left:1700.00px;top:627.70px;" width="12" height="7" viewBox="0 0 12 7" preserveAspectRatio="none"><path d="M0.600 0.600l5.300 5.300 5.300 -5.300" fill="none" stroke="#605e5c" stroke-width="1.100"/></svg>
<svg class="r" style="left:1717.50px;top:626.90px;" width="9" height="9" viewBox="0 0 9 9" preserveAspectRatio="none"><path d="M0.500 0.500l7.800 7.800M8.300 0.500l-7.800 7.800" fill="none" stroke="#3b3a39" stroke-width="1.100"/></svg>
<span class="t" style="left:1571.60px;top:664.32px;font-size:12.60px;line-height:14.09px;color:#605e5c;letter-spacing:-0.246px;">Tooltips</span>
<div class="r" style="left:1564.4px;top:685.50px;width:169.4px;height:26.30px;background:#fff;border:1.2px dotted #c2c0be;box-sizing:border-box;"></div>
<span class="t" style="left:1574.90px;top:692.27px;font-size:12.60px;line-height:14.09px;color:#3b3a39;letter-spacing:-0.250px;transform:scaleX(0.9886);transform-origin:0 50%;">Add data fields here</span>
<span class="t" style="left:1574.30px;top:728.51px;font-size:16.00px;line-height:17.89px;color:#3b3a39;letter-spacing:0.250px;transform:scaleX(1.0274);transform-origin:0 50%;-webkit-text-stroke:0.40px #3b3a39;">Drill through</span>
<span class="t" style="left:1568.90px;top:762.42px;font-size:12.60px;line-height:14.09px;color:#605e5c;letter-spacing:-0.250px;transform:scaleX(0.9797);transform-origin:0 50%;">Cross-report</span>
<span class="t" style="left:1577.80px;top:791.62px;font-size:12.60px;line-height:14.09px;color:#605e5c;letter-spacing:-0.087px;">Off</span>
<svg class="r" style="left:1596.00px;top:791.00px;" width="34" height="16" viewBox="0 0 34 16" preserveAspectRatio="none"><path d="M12.600 7.800H32" stroke="#605e5c" stroke-width="1.900"/><circle cx="7.400" cy="7.800" r="4.300" fill="#f3f2f1" stroke="#605e5c" stroke-width="2"/></svg>
<span class="t" style="left:1568.90px;top:826.42px;font-size:12.60px;line-height:14.09px;color:#605e5c;letter-spacing:-0.250px;transform:scaleX(0.9723);transform-origin:0 50%;">Keep all filters</span>
<span class="t" style="left:1577.80px;top:855.62px;font-size:12.60px;line-height:14.09px;color:#605e5c;letter-spacing:-0.250px;transform:scaleX(0.9180);transform-origin:0 50%;">On</span>
<svg class="r" style="left:1596.00px;top:854.00px;" width="34" height="16" viewBox="0 0 34 16" preserveAspectRatio="none"><path d="M1.200 8.200H22" stroke="#605e5c" stroke-width="1.900"/><circle cx="25" cy="8.200" r="6" fill="#605e5c"/></svg>
<div class="r" style="left:1564.4px;top:884.20px;width:169.4px;height:25.40px;background:#fff;border:1.2px dotted #c2c0be;box-sizing:border-box;"></div>
<span class="t" style="left:1572.80px;top:890.52px;font-size:12.60px;line-height:14.09px;color:#3b3a39;letter-spacing:-0.132px;">Add drill-through fields here</span>
<div class="r" style="left:1740.20px;top:165.30px;width:1.00px;height:893.70px;background:#e1dfdd;"></div>
<div class="r" style="left:1741.20px;top:165.30px;width:180.00px;height:893.70px;background:#f3f2f1;"></div>
<span class="t" style="left:1753.20px;top:182.11px;font-size:16.00px;line-height:17.89px;color:#3b3a39;letter-spacing:-0.250px;transform:scaleX(0.9848);transform-origin:0 50%;-webkit-text-stroke:0.35px #3b3a39;">Fields</span>
<svg class="r" style="left:1901.00px;top:183.50px;" width="8" height="13" viewBox="0 0 8 13" preserveAspectRatio="none"><path d="M1 0.700l5.800 5.800L1 12.300" fill="none" stroke="#605e5c" stroke-width="1.200"/></svg>
<div class="r" style="left:1745.2px;top:218.4px;width:170.8px;height:29.2px;background:#fff;border:1px solid #c8c6c4;box-sizing:border-box;border-radius:2px;"></div>
<svg class="r" style="left:1755.50px;top:223.00px;" width="18" height="18" viewBox="0 0 18 18" preserveAspectRatio="none"><circle cx="11.400" cy="6.600" r="5.300" fill="none" stroke="#3b3a39" stroke-width="1.100"/><path d="M7.600 10.400L1.200 16.800" stroke="#3b3a39" stroke-width="1.200"/></svg>
<span class="t" style="left:1780.70px;top:225.48px;font-size:13.20px;line-height:14.76px;color:#3b3a39;letter-spacing:-0.250px;transform:scaleX(0.9366);transform-origin:0 50%;">Search</span>
<div class="r" style="left:1741.20px;top:252.20px;width:179.00px;height:1.00px;background:#eceae8;"></div>
<svg class="r" style="left:1743.80px;top:271.30px;" width="13" height="7" viewBox="0 0 13 7" preserveAspectRatio="none"><path d="M0.600 6.300L6.300 0.700 12 6.300" fill="none" stroke="#605e5c" stroke-width="1.100"/></svg>
<svg class="r" style="left:1763.50px;top:269.00px;" width="14" height="12" viewBox="0 0 14 12" preserveAspectRatio="none"><rect x="0" y="0" width="13.300" height="11.500" fill="#252423"/><g fill="#f3f2f1"><rect x="1.200" y="3" width="3" height="1.900"/><rect x="5.200" y="3" width="3" height="1.900"/><rect x="9.200" y="3" width="3" height="1.900"/><rect x="1.200" y="5.900" width="3" height="1.900"/><rect x="5.200" y="5.900" width="3" height="1.900"/><rect x="9.200" y="5.900" width="3" height="1.900"/><rect x="1.200" y="8.800" width="3" height="1.900"/><rect x="5.200" y="8.800" width="3" height="1.900"/><rect x="9.200" y="8.800" width="3" height="1.900"/></g></svg>
<div class="r" style="left:1770.80px;top:276.00px;width:12.00px;height:12.00px;background:#f2c811;border-radius:50%;"></div>
<svg class="r" style="left:1773.30px;top:279.00px;" width="7" height="6" viewBox="0 0 7 6" preserveAspectRatio="none"><path d="M0.700 3l1.900 1.900 3.600 -4" fill="none" stroke="#8a2a12" stroke-width="1.300"/></svg>
<span class="t" style="left:1789.40px;top:267.45px;font-size:12.90px;line-height:14.42px;color:#252423;letter-spacing:-0.250px;transform:scaleX(0.9703);transform-origin:0 50%;-webkit-text-stroke:0.25px #252423;">financials</span>
<svg class="r" style="left:1772.00px;top:297.70px;" width="14" height="14" viewBox="0 0 14 14" preserveAspectRatio="none"><rect x="1.500" y="1.400" width="10.600" height="10.400" rx="1.600" fill="#f6f5f4" stroke="#6b6a69" stroke-width="1.500"/></svg>
<svg class="r" style="left:1790.00px;top:300.10px;" width="8.7" height="9.7" viewBox="0 0 9 10.2" preserveAspectRatio="none"><path d="M8.300 2.800V0.600H0.800l4 4.500 -4 4.500h7.500V7.300" fill="none" stroke="#252423" stroke-width="1.400" stroke-linejoin="miter"/></svg>
<span class="t" style="left:1809.70px;top:298.12px;font-size:12.60px;line-height:14.09px;color:#3b3a39;letter-spacing:-0.250px;transform:scaleX(0.8618);transform-origin:0 50%;">Sales</span>
<svg class="r" style="left:1772.00px;top:321.70px;" width="14" height="14" viewBox="0 0 14 14" preserveAspectRatio="none"><rect x="1.500" y="1.400" width="10.600" height="10.400" rx="1.600" fill="#f6f5f4" stroke="#6b6a69" stroke-width="1.500"/></svg>
<svg class="r" style="left:1790.00px;top:324.10px;" width="8.7" height="9.7" viewBox="0 0 9 10.2" preserveAspectRatio="none"><path d="M8.300 2.800V0.600H0.800l4 4.500 -4 4.500h7.500V7.300" fill="none" stroke="#252423" stroke-width="1.400" stroke-linejoin="miter"/></svg>
<span class="t" style="left:1809.70px;top:322.12px;font-size:12.60px;line-height:14.09px;color:#3b3a39;letter-spacing:-0.250px;transform:scaleX(0.8335);transform-origin:0 50%;">COGS</span>
<div class="r" style="left:1772.80px;top:346.60px;width:11.80px;height:11.80px;background:#f2c811;border-radius:1.500px;"></div>
<svg class="r" style="left:1775.00px;top:349.20px;" width="8" height="7" viewBox="0 0 8 7" preserveAspectRatio="none"><path d="M0.700 3.300l2.200 2.300 4.200 -4.700" fill="none" stroke="#8a2a12" stroke-width="1.300"/></svg>
<span class="t" style="left:1809.70px;top:346.12px;font-size:12.60px;line-height:14.09px;color:#3b3a39;letter-spacing:-0.250px;">Country</span>
<svg class="r" style="left:1772.00px;top:369.70px;" width="14" height="14" viewBox="0 0 14 14" preserveAspectRatio="none"><rect x="1.500" y="1.400" width="10.600" height="10.400" rx="1.600" fill="#f6f5f4" stroke="#6b6a69" stroke-width="1.500"/></svg>
<svg class="r" style="left:1788.30px;top:369.60px;" width="12.6" height="13.2" viewBox="0 0 12 12" preserveAspectRatio="none"><rect x="0.600" y="1.600" width="10.800" height="9.800" fill="none" stroke="#252423" stroke-width="1.200"/><path d="M0.600 3.200h10.800" stroke="#252423" stroke-width="2"/><path d="M3 0v2.500M9 0v2.500" stroke="#252423" stroke-width="1.200"/><g fill="#252423"><rect x="2.300" y="5.500" width="1.500" height="1.400"/><rect x="5.200" y="5.500" width="1.500" height="1.400"/><rect x="8.100" y="5.500" width="1.500" height="1.400"/><rect x="2.300" y="8.200" width="1.500" height="1.400"/><rect x="5.200" y="8.200" width="1.500" height="1.400"/><rect x="8.100" y="8.200" width="1.500" height="1.400"/></g></svg>
<svg class="r" style="left:1752.50px;top:373.20px;" width="13" height="7" viewBox="0 0 13 7" preserveAspectRatio="none"><path d="M0.600 0.700L6.300 6.300 12 0.700" fill="none" stroke="#605e5c" stroke-width="1.100"/></svg>
<span class="t" style="left:1809.70px;top:370.12px;font-size:12.60px;line-height:14.09px;color:#3b3a39;letter-spacing:-0.250px;transform:scaleX(0.9588);transform-origin:0 50%;">Date</span>
<svg class="r" style="left:1772.00px;top:393.70px;" width="14" height="14" viewBox="0 0 14 14" preserveAspectRatio="none"><rect x="1.500" y="1.400" width="10.600" height="10.400" rx="1.600" fill="#f6f5f4" stroke="#6b6a69" stroke-width="1.500"/></svg>
<svg class="r" style="left:1789.00px;top:394.50px;" width="11" height="12" viewBox="0 0 11 12" preserveAspectRatio="none"><rect x="0.500" y="0.500" width="3.600" height="2.800" fill="#f2a63b" stroke="#8a5a12" stroke-width="0.800"/><rect x="6.500" y="4.300" width="3.600" height="2.800" fill="#f2a63b" stroke="#8a5a12" stroke-width="0.800"/><rect x="6.500" y="8.500" width="3.600" height="2.800" fill="#f2a63b" stroke="#8a5a12" stroke-width="0.800"/><path d="M2.300 3.300v6.600h4.200M2.300 5.700h4.200" fill="none" stroke="#252423" stroke-width="1" stroke-dasharray="1 0.800"/></svg>
<svg class="r" style="left:1752.50px;top:397.20px;" width="13" height="7" viewBox="0 0 13 7" preserveAspectRatio="none"><path d="M0.600 0.700L6.300 6.300 12 0.700" fill="none" stroke="#605e5c" stroke-width="1.100"/></svg>
<span class="t" style="left:1809.70px;top:394.12px;font-size:12.60px;line-height:14.09px;color:#3b3a39;letter-spacing:-0.250px;transform:scaleX(0.9693);transform-origin:0 50%;">Date Hierar...</span>
<svg class="r" style="left:1772.00px;top:417.70px;" width="14" height="14" viewBox="0 0 14 14" preserveAspectRatio="none"><rect x="1.500" y="1.400" width="10.600" height="10.400" rx="1.600" fill="#f6f5f4" stroke="#6b6a69" stroke-width="1.500"/></svg>
<span class="t" style="left:1809.70px;top:418.12px;font-size:12.60px;line-height:14.09px;color:#3b3a39;letter-spacing:-0.250px;transform:scaleX(0.9483);transform-origin:0 50%;">Discount Ba...</span>
<svg class="r" style="left:1772.00px;top:441.70px;" width="14" height="14" viewBox="0 0 14 14" preserveAspectRatio="none"><rect x="1.500" y="1.400" width="10.600" height="10.400" rx="1.600" fill="#f6f5f4" stroke="#6b6a69" stroke-width="1.500"/></svg>
<svg class="r" style="left:1790.00px;top:444.10px;" width="8.7" height="9.7" viewBox="0 0 9 10.2" preserveAspectRatio="none"><path d="M8.300 2.800V0.600H0.800l4 4.500 -4 4.500h7.500V7.300" fill="none" stroke="#252423" stroke-width="1.400" stroke-linejoin="miter"/></svg>
<span class="t" style="left:1809.70px;top:442.12px;font-size:12.60px;line-height:14.09px;color:#3b3a39;letter-spacing:-0.250px;transform:scaleX(0.9677);transform-origin:0 50%;">Discounts</span>
<svg class="r" style="left:1772.00px;top:465.70px;" width="14" height="14" viewBox="0 0 14 14" preserveAspectRatio="none"><rect x="1.500" y="1.400" width="10.600" height="10.400" rx="1.600" fill="#f6f5f4" stroke="#6b6a69" stroke-width="1.500"/></svg>
<svg class="r" style="left:1790.00px;top:468.10px;" width="8.7" height="9.7" viewBox="0 0 9 10.2" preserveAspectRatio="none"><path d="M8.300 2.800V0.600H0.800l4 4.500 -4 4.500h7.500V7.300" fill="none" stroke="#252423" stroke-width="1.400" stroke-linejoin="miter"/></svg>
<span class="t" style="left:1809.70px;top:466.12px;font-size:12.60px;line-height:14.09px;color:#3b3a39;letter-spacing:-0.250px;transform:scaleX(0.9013);transform-origin:0 50%;">Gross Sales</span>
<svg class="r" style="left:1772.00px;top:489.70px;" width="14" height="14" viewBox="0 0 14 14" preserveAspectRatio="none"><rect x="1.500" y="1.400" width="10.600" height="10.400" rx="1.600" fill="#f6f5f4" stroke="#6b6a69" stroke-width="1.500"/></svg>
<svg class="r" style="left:1790.00px;top:492.10px;" width="8.7" height="9.7" viewBox="0 0 9 10.2" preserveAspectRatio="none"><path d="M8.300 2.800V0.600H0.800l4 4.500 -4 4.500h7.500V7.300" fill="none" stroke="#252423" stroke-width="1.400" stroke-linejoin="miter"/></svg>
<span class="t" style="left:1809.70px;top:490.12px;font-size:12.60px;line-height:14.09px;color:#3b3a39;letter-spacing:-0.250px;transform:scaleX(0.9923);transform-origin:0 50%;">Manufactur...</span>
<svg class="r" style="left:1772.00px;top:513.70px;" width="14" height="14" viewBox="0 0 14 14" preserveAspectRatio="none"><rect x="1.500" y="1.400" width="10.600" height="10.400" rx="1.600" fill="#f6f5f4" stroke="#6b6a69" stroke-width="1.500"/></svg>
<span class="t" style="left:1809.70px;top:514.12px;font-size:12.60px;line-height:14.09px;color:#3b3a39;letter-spacing:-0.203px;">Month Name</span>
<svg class="r" style="left:1772.00px;top:537.70px;" width="14" height="14" viewBox="0 0 14 14" preserveAspectRatio="none"><rect x="1.500" y="1.400" width="10.600" height="10.400" rx="1.600" fill="#f6f5f4" stroke="#6b6a69" stroke-width="1.500"/></svg>
<svg class="r" style="left:1790.00px;top:540.10px;" width="8.7" height="9.7" viewBox="0 0 9 10.2" preserveAspectRatio="none"><path d="M8.300 2.800V0.600H0.800l4 4.500 -4 4.500h7.500V7.300" fill="none" stroke="#252423" stroke-width="1.400" stroke-linejoin="miter"/></svg>
<span class="t" style="left:1809.70px;top:538.12px;font-size:12.60px;line-height:14.09px;color:#3b3a39;letter-spacing:-0.183px;">Month Nu...</span>
<svg class="r" style="left:1772.00px;top:561.70px;" width="14" height="14" viewBox="0 0 14 14" preserveAspectRatio="none"><rect x="1.500" y="1.400" width="10.600" height="10.400" rx="1.600" fill="#f6f5f4" stroke="#6b6a69" stroke-width="1.500"/></svg>
<span class="t" style="left:1809.70px;top:562.12px;font-size:12.60px;line-height:14.09px;color:#3b3a39;letter-spacing:-0.250px;transform:scaleX(0.9851);transform-origin:0 50%;">Product</span>
<div class="r" style="left:1772.80px;top:586.60px;width:11.80px;height:11.80px;background:#f2c811;border-radius:1.500px;"></div>
<svg class="r" style="left:1775.00px;top:589.20px;" width="8" height="7" viewBox="0 0 8 7" preserveAspectRatio="none"><path d="M0.700 3.300l2.200 2.300 4.200 -4.700" fill="none" stroke="#8a2a12" stroke-width="1.300"/></svg>
<svg class="r" style="left:1790.00px;top:588.10px;" width="8.7" height="9.7" viewBox="0 0 9 10.2" preserveAspectRatio="none"><path d="M8.300 2.800V0.600H0.800l4 4.500 -4 4.500h7.500V7.300" fill="none" stroke="#252423" stroke-width="1.400" stroke-linejoin="miter"/></svg>
<span class="t" style="left:1809.70px;top:586.12px;font-size:12.60px;line-height:14.09px;color:#3b3a39;letter-spacing:-0.162px;">Profit</span>
<div class="r" style="left:1772.80px;top:610.60px;width:11.80px;height:11.80px;background:#f2c811;border-radius:1.500px;"></div>
<svg class="r" style="left:1775.00px;top:613.20px;" width="8" height="7" viewBox="0 0 8 7" preserveAspectRatio="none"><path d="M0.700 3.300l2.200 2.300 4.200 -4.700" fill="none" stroke="#8a2a12" stroke-width="1.300"/></svg>
<svg class="r" style="left:1790.00px;top:612.10px;" width="8.7" height="9.7" viewBox="0 0 9 10.2" preserveAspectRatio="none"><path d="M8.300 2.800V0.600H0.800l4 4.500 -4 4.500h7.500V7.300" fill="none" stroke="#252423" stroke-width="1.400" stroke-linejoin="miter"/></svg>
<span class="t" style="left:1809.70px;top:610.12px;font-size:12.60px;line-height:14.09px;color:#3b3a39;letter-spacing:-0.250px;transform:scaleX(0.9171);transform-origin:0 50%;">Sale Price</span>
<div class="r" style="left:1772.80px;top:634.60px;width:11.80px;height:11.80px;background:#f2c811;border-radius:1.500px;"></div>
<svg class="r" style="left:1775.00px;top:637.20px;" width="8" height="7" viewBox="0 0 8 7" preserveAspectRatio="none"><path d="M0.700 3.300l2.200 2.300 4.200 -4.700" fill="none" stroke="#8a2a12" stroke-width="1.300"/></svg>
<span class="t" style="left:1809.70px;top:634.12px;font-size:12.60px;line-height:14.09px;color:#3b3a39;letter-spacing:-0.250px;transform:scaleX(0.9626);transform-origin:0 50%;">Segment</span>
<svg class="r" style="left:1772.00px;top:657.70px;" width="14" height="14" viewBox="0 0 14 14" preserveAspectRatio="none"><rect x="1.500" y="1.400" width="10.600" height="10.400" rx="1.600" fill="#f6f5f4" stroke="#6b6a69" stroke-width="1.500"/></svg>
<svg class="r" style="left:1789.80px;top:658.80px;" width="9.2" height="11.5" viewBox="0 0 8.2 10.2" preserveAspectRatio="none"><rect x="0.300" y="0.300" width="7.600" height="9.600" rx="0.600" fill="#252423"/><rect x="1.600" y="1.500" width="5" height="1.500" fill="#e8e7e6"/><g fill="#9a9998"><rect x="1.600" y="4.500" width="0.900" height="0.800"/><rect x="3.600" y="4.500" width="0.900" height="0.800"/><rect x="5.600" y="4.500" width="0.900" height="0.800"/><rect x="1.600" y="6.200" width="0.900" height="0.800"/><rect x="3.600" y="6.200" width="0.900" height="0.800"/><rect x="5.600" y="6.200" width="0.900" height="0.800"/><rect x="1.600" y="7.900" width="0.900" height="0.800"/><rect x="3.600" y="7.900" width="0.900" height="0.800"/><rect x="5.600" y="7.900" width="0.900" height="0.800"/></g></svg>
<span class="t" style="left:1809.70px;top:658.12px;font-size:12.60px;line-height:14.09px;color:#3b3a39;letter-spacing:-0.250px;transform:scaleX(0.9454);transform-origin:0 50%;">Selected co...</span>
<svg class="r" style="left:1772.00px;top:681.70px;" width="14" height="14" viewBox="0 0 14 14" preserveAspectRatio="none"><rect x="1.500" y="1.400" width="10.600" height="10.400" rx="1.600" fill="#f6f5f4" stroke="#6b6a69" stroke-width="1.500"/></svg>
<svg class="r" style="left:1789.80px;top:682.80px;" width="9.2" height="11.5" viewBox="0 0 8.2 10.2" preserveAspectRatio="none"><rect x="0.300" y="0.300" width="7.600" height="9.600" rx="0.600" fill="#252423"/><rect x="1.600" y="1.500" width="5" height="1.500" fill="#e8e7e6"/><g fill="#9a9998"><rect x="1.600" y="4.500" width="0.900" height="0.800"/><rect x="3.600" y="4.500" width="0.900" height="0.800"/><rect x="5.600" y="4.500" width="0.900" height="0.800"/><rect x="1.600" y="6.200" width="0.900" height="0.800"/><rect x="3.600" y="6.200" width="0.900" height="0.800"/><rect x="5.600" y="6.200" width="0.900" height="0.800"/><rect x="1.600" y="7.900" width="0.900" height="0.800"/><rect x="3.600" y="7.900" width="0.900" height="0.800"/><rect x="5.600" y="7.900" width="0.900" height="0.800"/></g></svg>
<span class="t" style="left:1809.70px;top:682.12px;font-size:12.60px;line-height:14.09px;color:#3b3a39;letter-spacing:-0.250px;transform:scaleX(0.9189);transform-origin:0 50%;">Selected Se...</span>
<svg class="r" style="left:1772.00px;top:705.70px;" width="14" height="14" viewBox="0 0 14 14" preserveAspectRatio="none"><rect x="1.500" y="1.400" width="10.600" height="10.400" rx="1.600" fill="#f6f5f4" stroke="#6b6a69" stroke-width="1.500"/></svg>
<svg class="r" style="left:1790.00px;top:708.10px;" width="8.7" height="9.7" viewBox="0 0 9 10.2" preserveAspectRatio="none"><path d="M8.300 2.800V0.600H0.800l4 4.500 -4 4.500h7.500V7.300" fill="none" stroke="#252423" stroke-width="1.400" stroke-linejoin="miter"/></svg>
<span class="t" style="left:1809.70px;top:706.12px;font-size:12.60px;line-height:14.09px;color:#3b3a39;letter-spacing:-0.250px;transform:scaleX(0.9714);transform-origin:0 50%;">Units Sold</span>
<svg class="r" style="left:1772.00px;top:729.70px;" width="14" height="14" viewBox="0 0 14 14" preserveAspectRatio="none"><rect x="1.500" y="1.400" width="10.600" height="10.400" rx="1.600" fill="#f6f5f4" stroke="#6b6a69" stroke-width="1.500"/></svg>
<svg class="r" style="left:1788.00px;top:730.80px;" width="13" height="11.4" viewBox="0 0 13 11.4" preserveAspectRatio="none"><rect x="0.500" y="0.500" width="12" height="10.400" fill="#4a4948" stroke="#252423" stroke-width="1"/><path d="M0.500 1.500h12" stroke="#252423" stroke-width="2.200"/><rect x="1.800" y="3.600" width="1.600" height="6.200" fill="#e8e7e6"/><path d="M5.200 4.200h6.300M5.200 6.700h6.300M5.200 9.200h6.300" stroke="#d0cfce" stroke-width="0.900" stroke-dasharray="1.100 0.700"/><path d="M5 3.600l3 3.100 -3 3.100z" fill="#e8e7e6"/></svg>
<span class="t" style="left:1809.70px;top:730.12px;font-size:12.60px;line-height:14.09px;color:#3b3a39;letter-spacing:-0.250px;transform:scaleX(0.9603);transform-origin:0 50%;">Week Num...</span>
<svg class="r" style="left:1772.00px;top:753.70px;" width="14" height="14" viewBox="0 0 14 14" preserveAspectRatio="none"><rect x="1.500" y="1.400" width="10.600" height="10.400" rx="1.600" fill="#f6f5f4" stroke="#6b6a69" stroke-width="1.500"/></svg>
<svg class="r" style="left:1790.00px;top:756.10px;" width="8.7" height="9.7" viewBox="0 0 9 10.2" preserveAspectRatio="none"><path d="M8.300 2.800V0.600H0.800l4 4.500 -4 4.500h7.500V7.300" fill="none" stroke="#252423" stroke-width="1.400" stroke-linejoin="miter"/></svg>
<span class="t" style="left:1809.70px;top:754.12px;font-size:12.60px;line-height:14.09px;color:#3b3a39;letter-spacing:-0.250px;transform:scaleX(0.9025);transform-origin:0 50%;">Year</span>
<div class="r" style="left:293.8px;top:152.2px;width:232.6px;height:24px;background:#fff;box-shadow:0 3px 8px rgba(0,0,0,0.17),0 0 2px rgba(0,0,0,0.14);border-radius:1px;"></div>
<svg class="r" style="left:403.50px;top:145.80px;" width="13" height="7" viewBox="0 0 13 7" preserveAspectRatio="none"><path d="M0 7L6.500 0.300 13 7z" fill="#ffffff"/></svg>
<span class="t" style="left:306.30px;top:159.24px;font-size:11.85px;line-height:13.25px;color:#484746;">Manage and connect to recent sources.</span>
<div class="r" style="left:1920.00px;top:0.00px;width:1.00px;height:1074.00px;background:#f6f5f4;"></div>
<div class="r" style="left:1920.00px;top:0.00px;width:1.00px;height:48.00px;background:#e5a77a;"></div>
<div class="r" style="left:1919.60px;top:103.00px;width:1.40px;height:84.00px;background:#1b1b1b;"></div>
</div></body></html>
